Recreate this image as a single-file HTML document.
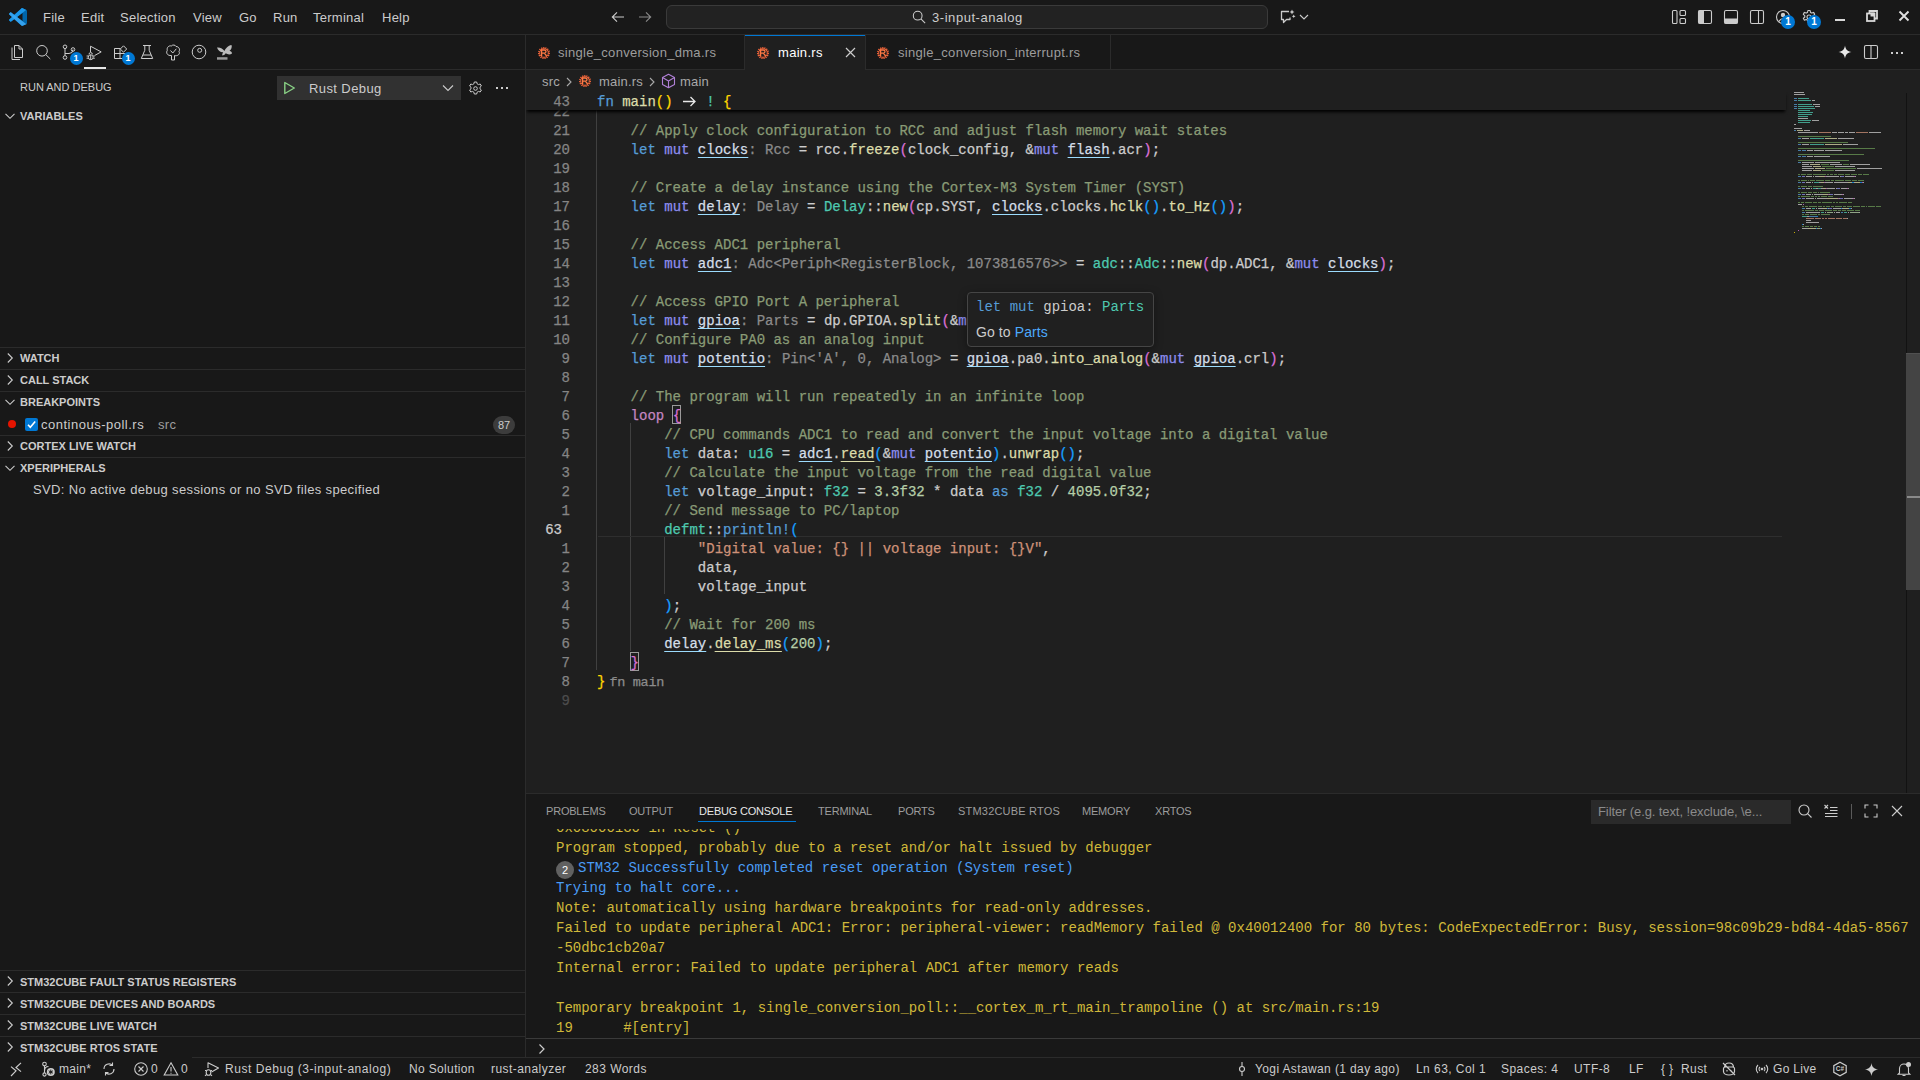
<!DOCTYPE html><html><head><meta charset="utf-8"><style>
*{margin:0;padding:0;box-sizing:border-box}
html,body{width:1920px;height:1080px;overflow:hidden;background:#181818}
body{position:relative;font-family:"Liberation Sans",sans-serif;color:#cccccc;font-size:13px}
.abs{position:absolute}
.mono{font-family:"Liberation Mono",monospace}
.ln{position:absolute;left:0;height:19px;line-height:19px;white-space:pre;font-family:"Liberation Mono",monospace;font-size:14px;-webkit-text-stroke:0.25px}
.num{position:absolute;width:42px;text-align:right;color:#858585}
.code{position:absolute;left:597px;color:#cccccc}
.kw{color:#569cd6}
.mu{color:#8d8df0}
.fnc{color:#dcdcaa}
.ty{color:#4ec9b0}
.cm{color:#899b76}
.kwc{color:#c586c0}
.st{color:#ce9178}
.nu{color:#b5cea8}
.hint{color:#8b8b8b}
.b1{color:#ffd700}
.b2{color:#da70d6}
.b3{color:#179fff}
.ul{color:#d4dee8;text-decoration:underline;text-decoration-color:#9cdcfe;text-underline-offset:3px}
.ulf{text-decoration:underline;text-decoration-color:#dcdcaa;text-underline-offset:3px}
.sh{position:absolute;font-size:11px;font-weight:bold;color:#cccccc;white-space:nowrap}
</style></head><body><div class="abs" style="left:0;top:0;width:1920px;height:35px;background:#181818;border-bottom:1px solid #2b2b2b"></div><div class="abs" style="left:0;top:35px;width:526px;height:1023px;background:#181818;border-right:1px solid #2b2b2b"></div><div class="abs" style="left:0;top:69px;width:526px;height:1px;background:#2b2b2b"></div><div class="abs" style="left:526px;top:35px;width:1394px;height:35px;background:#181818;border-bottom:1px solid #2b2b2b"></div><div class="abs" style="left:526px;top:70px;width:1394px;height:723px;background:#1f1f1f"></div><div class="abs" style="left:526px;top:793px;width:1394px;height:265px;background:#181818;border-top:1px solid #2b2b2b"></div><div class="abs" style="left:0;top:1058px;width:1920px;height:22px;background:#181818"></div><div class="abs" style="left:192px;top:1057px;width:1728px;height:1px;background:#2b2b2b"></div><div class="abs" style="left:526px;top:70px;width:1394px;height:724px;overflow:hidden"><div class="abs" style="left:70px;top:40px;width:1px;height:560px;background:#404040"></div><div class="abs" style="left:104px;top:353px;width:1px;height:228px;background:#404040"></div><div class="abs" style="left:138px;top:467px;width:1px;height:57px;background:#404040"></div><div class="abs" style="left:145.6px;top:335px;width:9px;height:19px;border:1px solid #9a9a9a"></div><div class="abs" style="left:104px;top:582px;width:9px;height:19px;border:1px solid #9a9a9a"></div><div class="abs" style="left:72px;top:466px;width:1184px;height:1px;background:#2e2e2e"></div><div class="ln" style="top:33px;width:1260px"><span class="num" style="left:2px;color:#858585">22</span><span class="code" style="left:71px"></span></div><div class="ln" style="top:52px;width:1260px"><span class="num" style="left:2px;color:#858585">21</span><span class="code" style="left:71px">    <span class="cm">// Apply clock configuration to RCC and adjust flash memory wait states</span></span></div><div class="ln" style="top:71px;width:1260px"><span class="num" style="left:2px;color:#858585">20</span><span class="code" style="left:71px">    <span class="kw">let</span> <span class="mu">mut</span> <span class="ul">clocks</span><span class="hint">: Rcc</span> = rcc.<span class="fnc">freeze</span><span class="b2">(</span>clock_config, &amp;<span class="mu">mut</span> <span class="ul">flash</span>.acr<span class="b2">)</span>;</span></div><div class="ln" style="top:90px;width:1260px"><span class="num" style="left:2px;color:#858585">19</span><span class="code" style="left:71px"></span></div><div class="ln" style="top:109px;width:1260px"><span class="num" style="left:2px;color:#858585">18</span><span class="code" style="left:71px">    <span class="cm">// Create a delay instance using the Cortex-M3 System Timer (SYST)</span></span></div><div class="ln" style="top:128px;width:1260px"><span class="num" style="left:2px;color:#858585">17</span><span class="code" style="left:71px">    <span class="kw">let</span> <span class="mu">mut</span> <span class="ul">delay</span><span class="hint">: Delay</span> = <span class="ty">Delay</span>::<span class="fnc">new</span><span class="b2">(</span>cp.SYST, <span class="ul">clocks</span>.clocks.<span class="fnc">hclk</span><span class="b3">()</span>.<span class="fnc">to_Hz</span><span class="b3">()</span><span class="b2">)</span>;</span></div><div class="ln" style="top:147px;width:1260px"><span class="num" style="left:2px;color:#858585">16</span><span class="code" style="left:71px"></span></div><div class="ln" style="top:166px;width:1260px"><span class="num" style="left:2px;color:#858585">15</span><span class="code" style="left:71px">    <span class="cm">// Access ADC1 peripheral</span></span></div><div class="ln" style="top:185px;width:1260px"><span class="num" style="left:2px;color:#858585">14</span><span class="code" style="left:71px">    <span class="kw">let</span> <span class="mu">mut</span> <span class="ul">adc1</span><span class="hint">: Adc&lt;Periph&lt;RegisterBlock, 1073816576&gt;&gt;</span> = <span class="ty">adc</span>::<span class="ty">Adc</span>::<span class="fnc">new</span><span class="b2">(</span>dp.ADC1, &amp;<span class="mu">mut</span> <span class="ul">clocks</span><span class="b2">)</span>;</span></div><div class="ln" style="top:204px;width:1260px"><span class="num" style="left:2px;color:#858585">13</span><span class="code" style="left:71px"></span></div><div class="ln" style="top:223px;width:1260px"><span class="num" style="left:2px;color:#858585">12</span><span class="code" style="left:71px">    <span class="cm">// Access GPIO Port A peripheral</span></span></div><div class="ln" style="top:242px;width:1260px"><span class="num" style="left:2px;color:#858585">11</span><span class="code" style="left:71px">    <span class="kw">let</span> <span class="mu">mut</span> <span class="ul">gpioa</span><span class="hint">: Parts</span> = dp.GPIOA.<span class="fnc">split</span><span class="b2">(</span>&amp;<span class="mu">mut</span> rcc.apb2<span class="b2">)</span>;</span></div><div class="ln" style="top:261px;width:1260px"><span class="num" style="left:2px;color:#858585">10</span><span class="code" style="left:71px">    <span class="cm">// Configure PA0 as an analog input</span></span></div><div class="ln" style="top:280px;width:1260px"><span class="num" style="left:2px;color:#858585">9</span><span class="code" style="left:71px">    <span class="kw">let</span> <span class="mu">mut</span> <span class="ul">potentio</span><span class="hint">: Pin&lt;'A', 0, Analog&gt;</span> = <span class="ul">gpioa</span>.pa0.<span class="fnc">into_analog</span><span class="b2">(</span>&amp;<span class="mu">mut</span> <span class="ul">gpioa</span>.crl<span class="b2">)</span>;</span></div><div class="ln" style="top:299px;width:1260px"><span class="num" style="left:2px;color:#858585">8</span><span class="code" style="left:71px"></span></div><div class="ln" style="top:318px;width:1260px"><span class="num" style="left:2px;color:#858585">7</span><span class="code" style="left:71px">    <span class="cm">// The program will run repeatedly in an infinite loop</span></span></div><div class="ln" style="top:337px;width:1260px"><span class="num" style="left:2px;color:#858585">6</span><span class="code" style="left:71px">    <span class="kwc">loop</span> <span class="b2">{</span></span></div><div class="ln" style="top:356px;width:1260px"><span class="num" style="left:2px;color:#858585">5</span><span class="code" style="left:71px">        <span class="cm">// CPU commands ADC1 to read and convert the input voltage into a digital value</span></span></div><div class="ln" style="top:375px;width:1260px"><span class="num" style="left:2px;color:#858585">4</span><span class="code" style="left:71px">        <span class="kw">let</span> data: <span class="ty">u16</span> = <span class="ul">adc1</span>.<span class="ulf fnc">read</span><span class="b3">(</span>&amp;<span class="mu">mut</span> <span class="ul">potentio</span><span class="b3">)</span>.<span class="fnc">unwrap</span><span class="b3">()</span>;</span></div><div class="ln" style="top:394px;width:1260px"><span class="num" style="left:2px;color:#858585">3</span><span class="code" style="left:71px">        <span class="cm">// Calculate the input voltage from the read digital value</span></span></div><div class="ln" style="top:413px;width:1260px"><span class="num" style="left:2px;color:#858585">2</span><span class="code" style="left:71px">        <span class="kw">let</span> voltage_input: <span class="ty">f32</span> = <span class="nu">3.3f32</span> * data <span class="kw">as</span> <span class="ty">f32</span> / <span class="nu">4095.0f32</span>;</span></div><div class="ln" style="top:432px;width:1260px"><span class="num" style="left:2px;color:#858585">1</span><span class="code" style="left:71px">        <span class="cm">// Send message to PC/laptop</span></span></div><div class="ln" style="top:451px;width:1260px"><span class="num" style="left:-6px;color:#cccccc">63</span><span class="code" style="left:71px">        <span class="ty">defmt</span>::<span class="kw">println!</span><span class="b3">(</span></span></div><div class="ln" style="top:470px;width:1260px"><span class="num" style="left:2px;color:#858585">1</span><span class="code" style="left:71px">            <span class="st">"Digital value: {} || voltage input: {}V"</span>,</span></div><div class="ln" style="top:489px;width:1260px"><span class="num" style="left:2px;color:#858585">2</span><span class="code" style="left:71px">            data,</span></div><div class="ln" style="top:508px;width:1260px"><span class="num" style="left:2px;color:#858585">3</span><span class="code" style="left:71px">            voltage_input</span></div><div class="ln" style="top:527px;width:1260px"><span class="num" style="left:2px;color:#858585">4</span><span class="code" style="left:71px">        <span class="b3">)</span>;</span></div><div class="ln" style="top:546px;width:1260px"><span class="num" style="left:2px;color:#858585">5</span><span class="code" style="left:71px">        <span class="cm">// Wait for 200 ms</span></span></div><div class="ln" style="top:565px;width:1260px"><span class="num" style="left:2px;color:#858585">6</span><span class="code" style="left:71px">        <span class="ul">delay</span>.<span class="ulf fnc">delay_ms</span><span class="b3">(</span><span class="nu">200</span><span class="b3">)</span>;</span></div><div class="ln" style="top:584px;width:1260px"><span class="num" style="left:2px;color:#858585">7</span><span class="code" style="left:71px">    <span class="b2">}</span></span></div><div class="ln" style="top:603px;width:1260px"><span class="num" style="left:2px;color:#858585">8</span><span class="code" style="left:71px"><span class="b1">}</span><span class="hint" style="font-size:13.5px;margin-left:4px;letter-spacing:-0.3px">fn main</span></span></div><div class="ln" style="top:622px;width:1260px"><span class="num" style="left:2px;color:#4d4d4d">9</span><span class="code" style="left:71px"></span></div><div class="abs" style="left:0;top:21px;width:1260px;height:19px;background:#1f1f1f;box-shadow:0 3px 3px -1px #000"></div><div class="ln" style="top:23px;width:1260px"><span class="num" style="left:2px">43</span><span class="code" style="left:71px"><span class="kw">fn</span> <span class="fnc">main</span><span class="b1">()</span> <svg style="display:inline-block;vertical-align:-1px" width="16.8" height="12" viewBox="0 0 16.8 12"><path d="M2 6.5h12M9.5 2l4.5 4.5-4.5 4.5" stroke="#e8e8e8" stroke-width="1.3" fill="none"/></svg> <span class="ty">!</span> <span class="b1">{</span></span></div></div><svg class="abs" style="left:9px;top:8px" width="18" height="18" viewBox="0 0 100 100">
<path fill="#0065a9" d="M96.5 10.8 75.9 0.9c-2.4-1.2-5.2-0.7-7.1 1.2L29.4 38 12.2 25c-1.6-1.2-3.8-1.1-5.3 0.2L1.4 30.2c-1.8 1.7-1.8 4.5 0 6.2L16.3 50 1.4 63.6c-1.8 1.7-1.8 4.5 0 6.2l5.5 5c1.5 1.4 3.7 1.5 5.3 0.2L29.4 62l39.4 35.9c1.9 1.9 4.7 2.4 7.1 1.2l20.6-9.9c2.2-1 3.5-3.2 3.5-5.6V16.4c0-2.4-1.4-4.6-3.5-5.6zM75 72.7 45.1 50 75 27.3v45.4z"/>
<path fill="#1f9cf0" d="M96.5 10.8 75.9 0.9c-2.4-1.2-5.2-0.7-7.1 1.2L1.4 63.6c-1.8 1.7-1.8 4.5 0 6.2l5.5 5c1.5 1.4 3.7 1.5 5.3 0.2L93.4 12.6c2.7-2.1 6.6-0.1 6.6 3.3v-0.2c0-2.4-1.4-4.6-3.5-4.9z" opacity="0.9"/>
<path fill="#3aa8f5" d="M75.9 99.1c-2.4 1.2-5.2 0.7-7.1-1.2L1.4 36.4c-1.8-1.7-1.8-4.5 0-6.2l5.5-5c1.5-1.4 3.7-1.5 5.3-0.2L93.4 87.4c2.7 2.1 6.6 0.1 6.6-3.3v0.2c0 2.4-1.4 4.6-3.5 5.6z" opacity="0.9"/>
</svg><div class="abs" style="left:43px;top:9px;font-size:13px;line-height:17px;color:#cccccc;letter-spacing:0.25px">File</div><div class="abs" style="left:81px;top:9px;font-size:13px;line-height:17px;color:#cccccc;letter-spacing:0.25px">Edit</div><div class="abs" style="left:120px;top:9px;font-size:13px;line-height:17px;color:#cccccc;letter-spacing:0.25px">Selection</div><div class="abs" style="left:193px;top:9px;font-size:13px;line-height:17px;color:#cccccc;letter-spacing:0.25px">View</div><div class="abs" style="left:239px;top:9px;font-size:13px;line-height:17px;color:#cccccc;letter-spacing:0.25px">Go</div><div class="abs" style="left:273px;top:9px;font-size:13px;line-height:17px;color:#cccccc;letter-spacing:0.25px">Run</div><div class="abs" style="left:313px;top:9px;font-size:13px;line-height:17px;color:#cccccc;letter-spacing:0.25px">Terminal</div><div class="abs" style="left:382px;top:9px;font-size:13px;line-height:17px;color:#cccccc;letter-spacing:0.25px">Help</div><svg class="abs" style="left:610px;top:9px" width="16" height="16" viewBox="0 0 16 16"><path d="M14 8H2.5M7 3.3 2.3 8 7 12.7" stroke="#cccccc" stroke-width="1.1" fill="none"/></svg><svg class="abs" style="left:637px;top:9px" width="16" height="16" viewBox="0 0 16 16"><path d="M2 8h11.5M9 3.3 13.7 8 9 12.7" stroke="#8a8a8a" stroke-width="1.1" fill="none"/></svg><div class="abs" style="left:666px;top:5px;width:602px;height:24px;border:1px solid #3a3a3a;border-radius:6px;background:#222222"></div><svg class="abs" style="left:912px;top:10px" width="14" height="14" viewBox="0 0 16 16"><circle cx="6.5" cy="6.5" r="5" stroke="#cccccc" stroke-width="1.2" fill="none"/><path d="M10.2 10.2 15 15" stroke="#cccccc" stroke-width="1.2"/></svg><div class="abs" style="left:932px;top:9px;font-size:13px;line-height:17px;color:#cccccc;letter-spacing:0.55px">3-input-analog</div><svg class="abs" style="left:1279px;top:8px" width="18" height="18" viewBox="0 0 18 18"><path d="M10 3.5H2.5v8h2v3l3-3H11V9.5" stroke="#cccccc" stroke-width="1.3" fill="none" stroke-linejoin="round"/><path d="M13 1.5l.8 1.7 1.7.8-1.7.8-.8 1.7-.8-1.7-1.7-.8 1.7-.8z M14.7 6.5l.6 1.2 1.2.6-1.2.6-.6 1.2-.6-1.2-1.2-.6 1.2-.6z" fill="#cccccc"/></svg><svg class="abs" style="left:1299px;top:13px" width="10" height="8" viewBox="0 0 10 8"><path d="M1 2l4 4 4-4" stroke="#cccccc" stroke-width="1.1" fill="none"/></svg><svg class="abs" style="left:1671px;top:9px" width="16" height="16" viewBox="0 0 16 16"><rect x="1.5" y="1.5" width="4.5" height="13" rx="1" stroke="#cccccc" stroke-width="1.1" fill="none"/><rect x="9" y="1.5" width="5.5" height="5" rx="1" stroke="#cccccc" stroke-width="1.1" fill="none"/><rect x="9" y="9.5" width="5.5" height="5" rx="1" stroke="#cccccc" stroke-width="1.1" fill="none"/></svg><svg class="abs" style="left:1697px;top:9px" width="16" height="16" viewBox="0 0 16 16"><rect x="1.5" y="1.5" width="13" height="13" rx="1.5" stroke="#cccccc" stroke-width="1.1" fill="none"/><rect x="1.5" y="1.5" width="5.5" height="13" fill="#cccccc"/></svg><svg class="abs" style="left:1723px;top:9px" width="16" height="16" viewBox="0 0 16 16"><rect x="1.5" y="1.5" width="13" height="13" rx="1.5" stroke="#cccccc" stroke-width="1.1" fill="none"/><rect x="1.5" y="9.5" width="13" height="5" fill="#cccccc"/></svg><svg class="abs" style="left:1749px;top:9px" width="16" height="16" viewBox="0 0 16 16"><rect x="1.5" y="1.5" width="13" height="13" rx="1.5" stroke="#cccccc" stroke-width="1.1" fill="none"/><path d="M9.5 1.5v13" stroke="#cccccc" stroke-width="1.1"/></svg><svg class="abs" style="left:1775px;top:9px" width="16" height="16" viewBox="0 0 16 16"><circle cx="8" cy="8" r="6.5" stroke="#cccccc" stroke-width="1.1" fill="none"/><circle cx="8" cy="6" r="2.2" fill="#cccccc"/><path d="M4 12.5c1-2 2.3-2.8 4-2.8s3 .8 4 2.8" stroke="#cccccc" stroke-width="1.1" fill="none"/></svg><svg class="abs" style="left:1801px;top:9px" width="16" height="16" viewBox="0 0 16 16"><path d="M6.9 1.5h2.2l.4 1.9 1.3.7 1.8-.7 1.1 1.9-1.5 1.3v1.4l1.5 1.3-1.1 1.9-1.8-.7-1.3.7-.4 1.9H6.9l-.4-1.9-1.3-.7-1.8.7-1.1-1.9 1.5-1.3V6.6L2.3 5.3l1.1-1.9 1.8.7 1.3-.7z" stroke="#cccccc" stroke-width="1.1" fill="none" stroke-linejoin="round"/><circle cx="8" cy="8" r="2" stroke="#cccccc" stroke-width="1.1" fill="none"/></svg><div class="abs" style="left:1781px;top:15px;width:14px;height:14px;border-radius:7px;background:#0078d4;color:#fff;font-size:10px;font-weight:bold;line-height:14px;text-align:center">1</div><div class="abs" style="left:1807px;top:15px;width:14px;height:14px;border-radius:7px;background:#0078d4;color:#fff;font-size:10px;font-weight:bold;line-height:14px;text-align:center">1</div><div class="abs" style="left:1835px;top:19px;width:10px;height:2px;background:#d8d8d8"></div><svg class="abs" style="left:1866px;top:10px" width="12" height="12" viewBox="0 0 12 12"><path d="M3.5 3.5V1h7.5v7.5H8.5" stroke="#d8d8d8" stroke-width="1.8" fill="none"/><rect x="1" y="3.5" width="7.5" height="7.5" stroke="#d8d8d8" stroke-width="1.8" fill="#181818"/><rect x="4.5" y="2.5" width="4" height="4" fill="#d8d8d8"/></svg><svg class="abs" style="left:1898px;top:10px" width="12" height="12" viewBox="0 0 12 12"><path d="M1.5 1.5l9 9M10.5 1.5l-9 9" stroke="#e0e0e0" stroke-width="1.9"/></svg><svg class="abs" style="left:8px;top:44px" width="16" height="17" viewBox="0 0 16 17" fill="none" stroke="#cccccc" stroke-width="1"><path d="M6.5 1.5h4.5l3.5 3.5v8.5h-8z M11 1.5V5h3.5" stroke-linejoin="round"/><path d="M4 3.5v12h8" /></svg><svg class="abs" style="left:35px;top:44px" width="16" height="16" viewBox="0 0 16 16" fill="none" stroke="#cccccc" stroke-width="1"><circle cx="7" cy="6.8" r="5.3"/><path d="M10.8 10.6 15.3 15"/></svg><svg class="abs" style="left:61px;top:44px" width="16" height="17" viewBox="0 0 16 17" fill="none" stroke="#cccccc" stroke-width="1"><circle cx="4" cy="2.8" r="1.8"/><circle cx="4" cy="13.5" r="1.8"/><circle cx="12" cy="5.5" r="1.8"/><path d="M4 4.6v7.1 M4 9.5h4a4 4 0 0 0 4-4"/></svg><svg class="abs" style="left:86px;top:44px" width="17" height="17" viewBox="0 0 17 17" fill="none" stroke="#cccccc" stroke-width="1"><path d="M4.5 8V2.2L15.2 7.9 8.8 11.4" stroke-linejoin="round"/><path d="M3 10.3a1.7 1.7 0 0 1 3.4 0"/><rect x="2.3" y="10.8" width="4.8" height="4.8" rx="2.2"/><path d="M0.6 12h1.7M7.1 12h1.7M0.6 14.2h1.7M7.1 14.2h1.7M4.7 10.8v4.8"/></svg><svg class="abs" style="left:113px;top:44px" width="17" height="17" viewBox="0 0 17 17" fill="none" stroke="#cccccc" stroke-width="1"><path d="M1.5 4.5h5.5v10h-5.5z M1.5 9.5h10.5v5h-5" /><path d="M10.5 1.8l3.2 3.2-3.2 3.2-3.2-3.2z"/></svg><svg class="abs" style="left:140px;top:44px" width="14" height="16" viewBox="0 0 14 16" fill="none" stroke="#cccccc" stroke-width="1"><path d="M3 1.5h8 M4.8 1.5v4.8L1.3 14.5h11.4L9.2 6.3V1.5 M3 11h8" stroke-linejoin="round"/></svg><svg class="abs" style="left:165px;top:44px" width="16" height="17" viewBox="0 0 16 17" fill="none" stroke="#cccccc" stroke-width="1"><path d="M6.5 11.5 C2 12 0.8 8.5 2.3 6.3 1.5 3.5 4 1.2 6.3 2 7.5 0.5 10.5 0.8 11 2.5 14 2.5 15.3 5.5 14 7.5 15.5 10 12.5 12.5 9.5 11.5V16H6.5z" stroke-linejoin="round"/><path d="M5.5 6.5 7.8 9 11.3 4.8"/></svg><svg class="abs" style="left:191px;top:44px" width="16" height="16" viewBox="0 0 16 16" fill="none" stroke="#cccccc" stroke-width="1"><circle cx="8" cy="8" r="6.8"/><circle cx="8.7" cy="6.3" r="2"/></svg><svg class="abs" style="left:216px;top:44px" width="17" height="17" viewBox="0 0 17 17"><path d="M1 3.5C4 3 7 5 8.5 7 9.5 4.5 12 1.5 15.5 1c0.8 2-0.2 4.5-2 5.8 1.5 0.3 2.5 1.5 2.5 2.8-2 1.3-4.5 1-6.3-0.3-0.8 1.5-2.3 2.2-3.5 2.3 0-1.3 0.3-2.5 1-3.3C4.5 8.5 2 6.5 1 3.5z" fill="#bbbbbb"/><rect x="1" y="13.2" width="10.5" height="2.5" fill="#999999"/></svg><div class="abs" style="left:69.5px;top:51.5px;width:13px;height:13px;border-radius:7px;background:#0078d4;color:#fff;font-size:9px;font-weight:bold;line-height:13px;text-align:center">1</div><div class="abs" style="left:121.5px;top:51.5px;width:13px;height:13px;border-radius:7px;background:#0078d4;color:#fff;font-size:9px;font-weight:bold;line-height:13px;text-align:center">1</div><div class="abs" style="left:84px;top:67px;width:22px;height:2px;background:#e7e7e7"></div><div class="abs" style="left:20px;top:80px;font-size:11px;line-height:14px;color:#cccccc;white-space:nowrap">RUN AND DEBUG</div><div class="abs" style="left:277px;top:76px;width:184px;height:24px;background:#313131"></div><svg class="abs" style="left:283px;top:81px" width="14" height="14" viewBox="0 0 14 14"><path d="M1.8 1.5v11l9.5-5.5z" stroke="#89d185" stroke-width="1.4" fill="none" stroke-linejoin="round"/></svg><div class="abs" style="left:309px;top:81px;font-size:13px;line-height:16px;color:#cccccc;white-space:nowrap;letter-spacing:0.4px">Rust Debug</div><svg class="abs" style="left:442px;top:84px" width="12" height="8" viewBox="0 0 12 8"><path d="M1 1.5l5 5 5-5" stroke="#cccccc" stroke-width="1.1" fill="none"/></svg><svg class="abs" style="left:468px;top:81px" width="15" height="15" viewBox="0 0 15 15" fill="none" stroke="#cccccc" stroke-width="1"><path d="M6.3 1h2.4l.4 1.8 1.4.8 1.7-.6 1.2 2-1.4 1.2v1.6l1.4 1.2-1.2 2-1.7-.6-1.4.8-.4 1.8H6.3l-.4-1.8-1.4-.8-1.7.6-1.2-2 1.4-1.2V6.2L1.6 5l1.2-2 1.7.6 1.4-.8z" stroke-linejoin="round"/><circle cx="7.5" cy="7.5" r="1.8"/></svg><div class="abs" style="left:496px;top:87px;width:2px;height:2px;background:#cccccc"></div><div class="abs" style="left:501px;top:87px;width:2px;height:2px;background:#cccccc"></div><div class="abs" style="left:506px;top:87px;width:2px;height:2px;background:#cccccc"></div><svg class="abs" style="left:4px;top:110px" width="12" height="12" viewBox="0 0 12 12"><path d="M1.5 3.8 6 8.3l4.5-4.5" stroke="#cccccc" stroke-width="1.1" fill="none"/></svg><div class="sh" style="left:20px;top:109px;line-height:14px">VARIABLES</div><div class="abs" style="left:0;top:347px;width:525px;height:1px;background:#2b2b2b"></div><svg class="abs" style="left:4px;top:352px" width="12" height="12" viewBox="0 0 12 12"><path d="M3.8 1.5 8.3 6l-4.5 4.5" stroke="#cccccc" stroke-width="1.1" fill="none"/></svg><div class="sh" style="left:20px;top:351px;line-height:14px">WATCH</div><div class="abs" style="left:0;top:369px;width:525px;height:1px;background:#2b2b2b"></div><svg class="abs" style="left:4px;top:374px" width="12" height="12" viewBox="0 0 12 12"><path d="M3.8 1.5 8.3 6l-4.5 4.5" stroke="#cccccc" stroke-width="1.1" fill="none"/></svg><div class="sh" style="left:20px;top:373px;line-height:14px">CALL STACK</div><div class="abs" style="left:0;top:391px;width:525px;height:1px;background:#2b2b2b"></div><svg class="abs" style="left:4px;top:396px" width="12" height="12" viewBox="0 0 12 12"><path d="M1.5 3.8 6 8.3l4.5-4.5" stroke="#cccccc" stroke-width="1.1" fill="none"/></svg><div class="sh" style="left:20px;top:395px;line-height:14px">BREAKPOINTS</div><div class="abs" style="left:8px;top:420px;width:8px;height:8px;border-radius:4px;background:#e51400"></div><div class="abs" style="left:25px;top:418px;width:13px;height:13px;border-radius:2px;background:#0078d4"></div><svg class="abs" style="left:25px;top:418px" width="13" height="13" viewBox="0 0 13 13"><path d="M3 6.8l2.3 2.4L10.2 3.5" stroke="#fff" stroke-width="1.6" fill="none"/></svg><div class="abs" style="left:41px;top:417px;font-size:13px;line-height:16px;color:#cccccc;white-space:nowrap;letter-spacing:0.5px">continous-poll.rs</div><div class="abs" style="left:158px;top:417px;font-size:13px;line-height:16px;color:#9d9d9d;white-space:nowrap;letter-spacing:0.3px">src</div><div class="abs" style="left:493px;top:416px;width:22px;height:18px;border-radius:9px;background:#3c3c3c;color:#cccccc;font-size:11px;line-height:18px;text-align:center">87</div><div class="abs" style="left:0;top:435px;width:525px;height:1px;background:#2b2b2b"></div><svg class="abs" style="left:4px;top:440px" width="12" height="12" viewBox="0 0 12 12"><path d="M3.8 1.5 8.3 6l-4.5 4.5" stroke="#cccccc" stroke-width="1.1" fill="none"/></svg><div class="sh" style="left:20px;top:439px;line-height:14px">CORTEX LIVE WATCH</div><div class="abs" style="left:0;top:457px;width:525px;height:1px;background:#2b2b2b"></div><svg class="abs" style="left:4px;top:462px" width="12" height="12" viewBox="0 0 12 12"><path d="M1.5 3.8 6 8.3l4.5-4.5" stroke="#cccccc" stroke-width="1.1" fill="none"/></svg><div class="sh" style="left:20px;top:461px;line-height:14px">XPERIPHERALS</div><div class="abs" style="left:33px;top:482px;font-size:13px;line-height:16px;color:#cccccc;white-space:nowrap;letter-spacing:0.36px">SVD: No active debug sessions or no SVD files specified</div><div class="abs" style="left:0;top:970px;width:525px;height:1px;background:#2b2b2b"></div><svg class="abs" style="left:4px;top:975px" width="12" height="12" viewBox="0 0 12 12"><path d="M3.8 1.5 8.3 6l-4.5 4.5" stroke="#cccccc" stroke-width="1.1" fill="none"/></svg><div class="sh" style="left:20px;top:975px;line-height:14px">STM32CUBE FAULT STATUS REGISTERS</div><div class="abs" style="left:0;top:992px;width:525px;height:1px;background:#2b2b2b"></div><svg class="abs" style="left:4px;top:997px" width="12" height="12" viewBox="0 0 12 12"><path d="M3.8 1.5 8.3 6l-4.5 4.5" stroke="#cccccc" stroke-width="1.1" fill="none"/></svg><div class="sh" style="left:20px;top:997px;line-height:14px">STM32CUBE DEVICES AND BOARDS</div><div class="abs" style="left:0;top:1014px;width:525px;height:1px;background:#2b2b2b"></div><svg class="abs" style="left:4px;top:1019px" width="12" height="12" viewBox="0 0 12 12"><path d="M3.8 1.5 8.3 6l-4.5 4.5" stroke="#cccccc" stroke-width="1.1" fill="none"/></svg><div class="sh" style="left:20px;top:1019px;line-height:14px">STM32CUBE LIVE WATCH</div><div class="abs" style="left:0;top:1036px;width:525px;height:1px;background:#2b2b2b"></div><svg class="abs" style="left:4px;top:1041px" width="12" height="12" viewBox="0 0 12 12"><path d="M3.8 1.5 8.3 6l-4.5 4.5" stroke="#cccccc" stroke-width="1.1" fill="none"/></svg><div class="sh" style="left:20px;top:1041px;line-height:14px">STM32CUBE RTOS STATE</div><div class="abs" style="left:744px;top:35px;width:1px;height:34px;background:#2b2b2b"></div><svg class="abs" style="left:537px;top:46px" width="14" height="14" viewBox="0 0 14 14"><circle cx="7" cy="7" r="5.2" stroke="#f0643a" stroke-width="1.6" fill="none" stroke-dasharray="1.2 0.9"/><circle cx="7" cy="7" r="4.3" stroke="#f0643a" stroke-width="1" fill="none"/><path d="M4.6 10V4h2.6c1.1 0 1.8.6 1.8 1.6 0 .9-.6 1.5-1.5 1.6L9.6 10M4.6 7.2h2.4" stroke="#ff7a45" stroke-width="1.3" fill="none"/></svg><div class="abs" style="left:558px;top:45px;font-size:13px;line-height:16px;white-space:nowrap;letter-spacing:0.3px;color:#9d9d9d">single_conversion_dma.rs</div><div class="abs" style="left:745px;top:35px;width:120px;height:35px;background:#1f1f1f;border-top:1px solid #0078d4"></div><svg class="abs" style="left:756px;top:46px" width="14" height="14" viewBox="0 0 14 14"><circle cx="7" cy="7" r="5.2" stroke="#f0643a" stroke-width="1.6" fill="none" stroke-dasharray="1.2 0.9"/><circle cx="7" cy="7" r="4.3" stroke="#f0643a" stroke-width="1" fill="none"/><path d="M4.6 10V4h2.6c1.1 0 1.8.6 1.8 1.6 0 .9-.6 1.5-1.5 1.6L9.6 10M4.6 7.2h2.4" stroke="#ff7a45" stroke-width="1.3" fill="none"/></svg><div class="abs" style="left:778px;top:45px;font-size:13px;line-height:16px;white-space:nowrap;letter-spacing:0.3px;color:#ffffff">main.rs</div><svg class="abs" style="left:845px;top:47px" width="11" height="11" viewBox="0 0 11 11"><path d="M1 1l9 9M10 1 1 10" stroke="#cccccc" stroke-width="1.2"/></svg><div class="abs" style="left:865px;top:35px;width:1px;height:34px;background:#2b2b2b"></div><svg class="abs" style="left:876px;top:46px" width="14" height="14" viewBox="0 0 14 14"><circle cx="7" cy="7" r="5.2" stroke="#f0643a" stroke-width="1.6" fill="none" stroke-dasharray="1.2 0.9"/><circle cx="7" cy="7" r="4.3" stroke="#f0643a" stroke-width="1" fill="none"/><path d="M4.6 10V4h2.6c1.1 0 1.8.6 1.8 1.6 0 .9-.6 1.5-1.5 1.6L9.6 10M4.6 7.2h2.4" stroke="#ff7a45" stroke-width="1.3" fill="none"/></svg><div class="abs" style="left:898px;top:45px;font-size:13px;line-height:16px;white-space:nowrap;letter-spacing:0.3px;color:#9d9d9d">single_conversion_interrupt.rs</div><div class="abs" style="left:1110px;top:35px;width:1px;height:34px;background:#2b2b2b"></div><svg class="abs" style="left:1837px;top:44px" width="16" height="16" viewBox="0 0 16 16"><path d="M8 1.5C8.6 5.5 10.5 7.4 14.5 8 10.5 8.6 8.6 10.5 8 14.5 7.4 10.5 5.5 8.6 1.5 8 5.5 7.4 7.4 5.5 8 1.5z" fill="#e8e8e8"/></svg><svg class="abs" style="left:1863px;top:44px" width="16" height="16" viewBox="0 0 16 16"><rect x="1.5" y="1.5" width="13" height="13" rx="1.5" stroke="#cccccc" stroke-width="1.1" fill="none"/><path d="M8 1.5v13" stroke="#cccccc" stroke-width="1.1"/></svg><div class="abs" style="left:1891px;top:52px;width:2px;height:2px;background:#cccccc"></div><div class="abs" style="left:1896px;top:52px;width:2px;height:2px;background:#cccccc"></div><div class="abs" style="left:1901px;top:52px;width:2px;height:2px;background:#cccccc"></div><div class="abs" style="left:542px;top:74px;font-size:13px;line-height:16px;white-space:nowrap;color:#a9a9a9;letter-spacing:0.2px">src</div><svg class="abs" style="left:564px;top:76px" width="10" height="12" viewBox="0 0 10 12"><path d="M3 2l4 4-4 4" stroke="#a9a9a9" stroke-width="1.1" fill="none"/></svg><svg class="abs" style="left:578px;top:74px" width="14" height="14" viewBox="0 0 14 14"><circle cx="7" cy="7" r="5.2" stroke="#f0643a" stroke-width="1.6" fill="none" stroke-dasharray="1.2 0.9"/><circle cx="7" cy="7" r="4.3" stroke="#f0643a" stroke-width="1" fill="none"/><path d="M4.6 10V4h2.6c1.1 0 1.8.6 1.8 1.6 0 .9-.6 1.5-1.5 1.6L9.6 10M4.6 7.2h2.4" stroke="#ff7a45" stroke-width="1.3" fill="none"/></svg><div class="abs" style="left:599px;top:74px;font-size:13px;line-height:16px;white-space:nowrap;color:#a9a9a9;letter-spacing:0.2px">main.rs</div><svg class="abs" style="left:647px;top:76px" width="10" height="12" viewBox="0 0 10 12"><path d="M3 2l4 4-4 4" stroke="#a9a9a9" stroke-width="1.1" fill="none"/></svg><svg class="abs" style="left:661px;top:73px" width="15" height="16" viewBox="0 0 15 16"><path d="M7.5 1.2 13.5 4.5v7L7.5 14.8 1.5 11.5v-7z M1.5 4.5 7.5 8l6-3.5 M7.5 8v6.8" stroke="#b180d7" stroke-width="1.1" fill="none" stroke-linejoin="round"/></svg><div class="abs" style="left:680px;top:74px;font-size:13px;line-height:16px;white-space:nowrap;color:#a9a9a9;letter-spacing:0.2px">main</div><div class="abs" style="left:546px;top:804px;font-size:11px;line-height:14px;white-space:nowrap;color:#9d9d9d;letter-spacing:-0.2px">PROBLEMS</div><div class="abs" style="left:629px;top:804px;font-size:11px;line-height:14px;white-space:nowrap;color:#9d9d9d;letter-spacing:-0.2px">OUTPUT</div><div class="abs" style="left:699px;top:804px;font-size:11px;line-height:14px;white-space:nowrap;color:#e7e7e7;letter-spacing:-0.2px">DEBUG CONSOLE</div><div class="abs" style="left:818px;top:804px;font-size:11px;line-height:14px;white-space:nowrap;color:#9d9d9d;letter-spacing:-0.2px">TERMINAL</div><div class="abs" style="left:898px;top:804px;font-size:11px;line-height:14px;white-space:nowrap;color:#9d9d9d;letter-spacing:-0.2px">PORTS</div><div class="abs" style="left:958px;top:804px;font-size:11px;line-height:14px;white-space:nowrap;color:#9d9d9d;letter-spacing:0.2px">STM32CUBE RTOS</div><div class="abs" style="left:1082px;top:804px;font-size:11px;line-height:14px;white-space:nowrap;color:#9d9d9d;letter-spacing:-0.2px">MEMORY</div><div class="abs" style="left:1155px;top:804px;font-size:11px;line-height:14px;white-space:nowrap;color:#9d9d9d;letter-spacing:-0.2px">XRTOS</div><div class="abs" style="left:698px;top:821px;width:98px;height:1px;background:#0078d4"></div><div class="abs" style="left:1591px;top:800px;width:200px;height:24px;background:#2a2a2a"></div><div class="abs" style="left:1598px;top:804px;font-size:13px;line-height:16px;color:#8b8b8b;white-space:nowrap;letter-spacing:-0.1px">Filter (e.g. text, !exclude, \e...</div><svg class="abs" style="left:1797px;top:803px" width="16" height="16" viewBox="0 0 16 16"><circle cx="7" cy="7" r="5" stroke="#cccccc" stroke-width="1.1" fill="none"/><path d="M10.6 10.6 14.5 14.5" stroke="#cccccc" stroke-width="1.1"/></svg><svg class="abs" style="left:1823px;top:803px" width="16" height="16" viewBox="0 0 16 16"><path d="M1.5 2l3.5 3.5M5 2 1.5 5.5 M7 4.5h7.5 M7 7.5h7.5 M2 10.5h12.5 M2 13.5h12.5" stroke="#cccccc" stroke-width="1.1" fill="none"/></svg><div class="abs" style="left:1851px;top:804px;width:1px;height:15px;background:#5a5a5a"></div><svg class="abs" style="left:1863px;top:803px" width="16" height="16" viewBox="0 0 16 16"><path d="M2 5.5V2h3.5 M10.5 2H14v3.5 M14 10.5V14h-3.5 M5.5 14H2v-3.5" stroke="#cccccc" stroke-width="1.1" fill="none"/></svg><svg class="abs" style="left:1890px;top:804px" width="14" height="14" viewBox="0 0 14 14"><path d="M2 2l10 10M12 2 2 12" stroke="#cccccc" stroke-width="1.1"/></svg><div class="abs" style="left:526px;top:829px;width:1394px;height:209px;overflow:hidden"><div class="abs mono" style="left:30px;top:-11px;font-size:14px;line-height:20px;white-space:pre;color:#d0b83a">0x08000130 in Reset ()</div><div class="abs mono" style="left:30px;top:9px;font-size:14px;line-height:20px;white-space:pre;color:#d0b83a">Program stopped, probably due to a reset and/or halt issued by debugger</div><div class="abs" style="left:30px;top:32px;width:18px;height:18px;border-radius:9px;background:#616161;color:#fff;font-size:11px;line-height:18px;text-align:center">2</div><div class="abs mono" style="left:52px;top:29px;font-size:14px;line-height:20px;white-space:pre;color:#4a9cf5">STM32 Successfully completed reset operation (System reset)</div><div class="abs mono" style="left:30px;top:49px;font-size:14px;line-height:20px;white-space:pre;color:#4a9cf5">Trying to halt core...</div><div class="abs mono" style="left:30px;top:69px;font-size:14px;line-height:20px;white-space:pre;color:#d0b83a">Note: automatically using hardware breakpoints for read-only addresses.</div><div class="abs mono" style="left:30px;top:89px;font-size:14px;line-height:20px;white-space:pre;color:#d0b83a">Failed to update peripheral ADC1: Error: peripheral-viewer: readMemory failed @ 0x40012400 for 80 bytes: CodeExpectedError: Busy, session=98c09b29-bd84-4da5-8567</div><div class="abs mono" style="left:30px;top:109px;font-size:14px;line-height:20px;white-space:pre;color:#d0b83a">-50dbc1cb20a7</div><div class="abs mono" style="left:30px;top:129px;font-size:14px;line-height:20px;white-space:pre;color:#d0b83a">Internal error: Failed to update peripheral ADC1 after memory reads</div><div class="abs mono" style="left:30px;top:149px;font-size:14px;line-height:20px;white-space:pre;color:#d0b83a"></div><div class="abs mono" style="left:30px;top:169px;font-size:14px;line-height:20px;white-space:pre;color:#d0b83a">Temporary breakpoint 1, single_conversion_poll::__cortex_m_rt_main_trampoline () at src/main.rs:19</div><div class="abs mono" style="left:30px;top:189px;font-size:14px;line-height:20px;white-space:pre;color:#d0b83a">19      #[entry]</div></div><div class="abs" style="left:526px;top:1038px;width:1394px;height:1px;background:#3a3a3a"></div><svg class="abs" style="left:536px;top:1043px" width="12" height="12" viewBox="0 0 12 12"><path d="M3.5 1.5 8 6l-4.5 4.5" stroke="#cccccc" stroke-width="1.2" fill="none"/></svg><svg class="abs" style="left:10px;top:1061px" width="16" height="16" viewBox="0 0 16 16" fill="none" stroke="#cccccc" stroke-width="1.1"><path d="M1 5.6 6 9.8 1 15 M11 1.9 6 6.5 11 10.6" stroke-width="1.2"/></svg><svg class="abs" style="left:41px;top:1061px" width="16" height="16" viewBox="0 0 16 16" fill="none" stroke="#cccccc" stroke-width="1.1"><circle cx="3.5" cy="3" r="1.8"/><circle cx="3.5" cy="13.5" r="1.6"/><path d="M3.5 4.8v7.1"/><path d="M3.5 10c0-3 1.5-4.5 4-4.5"/><circle cx="9.8" cy="11" r="4" fill="#cccccc" stroke="none"/><path d="M9.8 8.6v4.8M7.7 9.8l4.2 2.4M11.9 9.8l-4.2 2.4" stroke="#181818" stroke-width="1"/></svg><div class="abs" style="left:59px;top:1061px;font-size:12px;line-height:16px;white-space:nowrap;color:#cccccc;letter-spacing:0.3px">main*</div><svg class="abs" style="left:101px;top:1061px" width="16" height="16" viewBox="0 0 16 16" fill="none" stroke="#cccccc" stroke-width="1.1"><path d="M3 8a5 5 0 0 1 8.6-3.5M13 8a5 5 0 0 1-8.6 3.5 M11.5 1.5v3h-3 M4.5 14.5v-3h3"/></svg><svg class="abs" style="left:133px;top:1061px" width="16" height="16" viewBox="0 0 16 16" fill="none" stroke="#cccccc" stroke-width="1.1"><circle cx="8" cy="8" r="6.3"/><path d="M5.5 5.5l5 5M10.5 5.5l-5 5"/></svg><div class="abs" style="left:151px;top:1061px;font-size:12px;line-height:16px;white-space:nowrap;color:#cccccc;letter-spacing:0px">0</div><svg class="abs" style="left:163px;top:1061px" width="16" height="16" viewBox="0 0 16 16" fill="none" stroke="#cccccc" stroke-width="1.1"><path d="M8 1.8 14.8 14H1.2z M8 6v4.5 M8 11.8v1"/></svg><div class="abs" style="left:181px;top:1061px;font-size:12px;line-height:16px;white-space:nowrap;color:#cccccc;letter-spacing:0px">0</div><svg class="abs" style="left:204px;top:1061px" width="16" height="16" viewBox="0 0 16 16" fill="none" stroke="#cccccc" stroke-width="1.1"><path d="M4 7V1.8l10.5 5.2-7 4" stroke-linejoin="round"/><ellipse cx="4.5" cy="11.5" rx="2.3" ry="2.8"/><path d="M1 9.5h1.3M8 9.5H6.8M1 14.8l1.5-1.2M8 14.8l-1.5-1.2"/></svg><div class="abs" style="left:225px;top:1061px;font-size:12px;line-height:16px;white-space:nowrap;color:#cccccc;letter-spacing:0.55px">Rust Debug (3-input-analog)</div><div class="abs" style="left:409px;top:1061px;font-size:12px;line-height:16px;white-space:nowrap;color:#cccccc;letter-spacing:0.35px">No Solution</div><div class="abs" style="left:491px;top:1061px;font-size:12px;line-height:16px;white-space:nowrap;color:#cccccc;letter-spacing:0.45px">rust-analyzer</div><div class="abs" style="left:585px;top:1061px;font-size:12px;line-height:16px;white-space:nowrap;color:#cccccc;letter-spacing:0.45px">283 Words</div><svg class="abs" style="left:1235px;top:1061px" width="14" height="16" viewBox="0 0 14 16" fill="none" stroke="#cccccc" stroke-width="1.1"><circle cx="7" cy="8" r="2.5"/><path d="M7 1v4.5M7 10.5V15"/></svg><div class="abs" style="left:1255px;top:1061px;font-size:12px;line-height:16px;white-space:nowrap;color:#cccccc;letter-spacing:0.38px">Yogi Astawan (1 day ago)</div><div class="abs" style="left:1416px;top:1061px;font-size:12px;line-height:16px;white-space:nowrap;color:#cccccc;letter-spacing:0.45px">Ln 63, Col 1</div><div class="abs" style="left:1501px;top:1061px;font-size:12px;line-height:16px;white-space:nowrap;color:#cccccc;letter-spacing:0.45px">Spaces: 4</div><div class="abs" style="left:1574px;top:1061px;font-size:12px;line-height:16px;white-space:nowrap;color:#cccccc;letter-spacing:0.45px">UTF-8</div><div class="abs" style="left:1629px;top:1061px;font-size:12px;line-height:16px;white-space:nowrap;color:#cccccc;letter-spacing:0.3px">LF</div><div class="abs" style="left:1661px;top:1061px;font-size:12px;line-height:16px;white-space:nowrap;color:#cccccc;letter-spacing:0.3px">{ }</div><div class="abs" style="left:1681px;top:1061px;font-size:12px;line-height:16px;white-space:nowrap;color:#cccccc;letter-spacing:0.4px">Rust</div><svg class="abs" style="left:1721px;top:1061px" width="16" height="16" viewBox="0 0 16 16" fill="none" stroke="#cccccc" stroke-width="1.1"><path d="M3.5 6.5C3.5 3.5 5.5 2 8 2s4.5 1.5 4.5 4.5 M2.5 7.5c0-1 1-1.5 2-1.5h7c1 0 2 .5 2 1.5v3c0 2-2.5 3.5-5.5 3.5s-5.5-1.5-5.5-3.5z M6 9v1.5M10 9v1.5 M2 2l12 12" stroke-width="1.2"/></svg><svg class="abs" style="left:1754px;top:1061px" width="16" height="16" viewBox="0 0 16 16" fill="none" stroke="#cccccc" stroke-width="1.1"><path d="M4 4a5.5 5.5 0 0 0 0 8M12 4a5.5 5.5 0 0 1 0 8M6 6a2.5 2.5 0 0 0 0 4M10 6a2.5 2.5 0 0 1 0 4"/><circle cx="8" cy="8" r="0.8" fill="#cccccc"/></svg><div class="abs" style="left:1773px;top:1061px;font-size:12px;line-height:16px;white-space:nowrap;color:#cccccc;letter-spacing:0.3px">Go Live</div><svg class="abs" style="left:1832px;top:1061px" width="16" height="16" viewBox="0 0 16 16" fill="none" stroke="#cccccc" stroke-width="1.1"><path d="M8 1.2 14.2 4.6v6.8L8 14.8 1.8 11.4V4.6z" stroke-width="1.2"/><text x="8" y="10.3" font-family="Liberation Sans" font-size="6.5" font-weight="bold" fill="#cccccc" stroke="none" text-anchor="middle">C#</text></svg><svg class="abs" style="left:1864px;top:1062px" width="15" height="15" viewBox="0 0 16 16"><path d="M8 1C8.6 5.3 10.7 7.4 15 8 10.7 8.6 8.6 10.7 8 15 7.4 10.7 5.3 8.6 1 8 5.3 7.4 7.4 5.3 8 1z" fill="#cccccc"/></svg><svg class="abs" style="left:1896px;top:1061px" width="16" height="16" viewBox="0 0 16 16" fill="none" stroke="#cccccc" stroke-width="1.1"><path d="M3.5 12V7.5a4.5 4.5 0 0 1 9 0V12l1.3 1.2H2.2z M6.5 14.5h3"/><circle cx="12.5" cy="3.5" r="2.5" fill="#cccccc" stroke="none"/></svg><div class="abs" style="left:967px;top:292px;width:187px;height:55px;background:#202020;border:1px solid #454545;border-radius:4px;box-shadow:0 2px 8px rgba(0,0,0,0.36)"></div><div class="abs mono" style="left:976px;top:298px;font-size:14px;line-height:19px;white-space:pre;color:#cccccc"><span class="kw">let</span> <span class="kw">mut</span> gpioa: <span class="ty">Parts</span></div><div class="abs" style="left:976px;top:324px;font-size:14px;line-height:17px;white-space:nowrap;color:#cccccc;letter-spacing:0.1px">Go to <span style="color:#4daafc">Parts</span></div><div class="abs" style="left:1906px;top:93px;width:1px;height:700px;background:#121212"></div><div class="abs" style="left:1906px;top:353px;width:14px;height:237px;background:#444444;border-top:1px solid #505050"></div><div class="abs" style="left:1907px;top:496px;width:13px;height:2px;background:#8a8a8a"></div><div class="abs" style="left:1794.0px;top:92.0px;width:10.0px;height:1px;background:#cccccc;opacity:0.75;box-shadow:0 1px 0 rgba(0,0,0,0)"></div><div class="abs" style="left:1794.0px;top:94.0px;width:11.0px;height:1px;background:#cccccc;opacity:0.75;box-shadow:0 1px 0 rgba(0,0,0,0)"></div><div class="abs" style="left:1794.0px;top:98.0px;width:3.0px;height:1px;background:#569cd6;opacity:0.75;box-shadow:0 1px 0 rgba(0,0,0,0)"></div><div class="abs" style="left:1798.0px;top:98.0px;width:11.0px;height:1px;background:#4ec9b0;opacity:0.75;box-shadow:0 1px 0 rgba(0,0,0,0)"></div><div class="abs" style="left:1794.0px;top:100.0px;width:3.0px;height:1px;background:#569cd6;opacity:0.75;box-shadow:0 1px 0 rgba(0,0,0,0)"></div><div class="abs" style="left:1798.0px;top:100.0px;width:13.0px;height:1px;background:#4ec9b0;opacity:0.75;box-shadow:0 1px 0 rgba(0,0,0,0)"></div><div class="abs" style="left:1812.0px;top:100.0px;width:3.0px;height:1px;background:#cccccc;opacity:0.75;box-shadow:0 1px 0 rgba(0,0,0,0)"></div><div class="abs" style="left:1794.0px;top:104.0px;width:3.0px;height:1px;background:#569cd6;opacity:0.75;box-shadow:0 1px 0 rgba(0,0,0,0)"></div><div class="abs" style="left:1798.0px;top:104.0px;width:14.0px;height:1px;background:#4ec9b0;opacity:0.75;box-shadow:0 1px 0 rgba(0,0,0,0)"></div><div class="abs" style="left:1813.0px;top:104.0px;width:7.0px;height:1px;background:#cccccc;opacity:0.75;box-shadow:0 1px 0 rgba(0,0,0,0)"></div><div class="abs" style="left:1794.0px;top:106.0px;width:3.0px;height:1px;background:#569cd6;opacity:0.75;box-shadow:0 1px 0 rgba(0,0,0,0)"></div><div class="abs" style="left:1798.0px;top:106.0px;width:16.0px;height:1px;background:#4ec9b0;opacity:0.75;box-shadow:0 1px 0 rgba(0,0,0,0)"></div><div class="abs" style="left:1815.0px;top:106.0px;width:5.0px;height:1px;background:#cccccc;opacity:0.75;box-shadow:0 1px 0 rgba(0,0,0,0)"></div><div class="abs" style="left:1794.0px;top:108.0px;width:3.0px;height:1px;background:#569cd6;opacity:0.75;box-shadow:0 1px 0 rgba(0,0,0,0)"></div><div class="abs" style="left:1798.0px;top:108.0px;width:17.0px;height:1px;background:#4ec9b0;opacity:0.75;box-shadow:0 1px 0 rgba(0,0,0,0)"></div><div class="abs" style="left:1798.0px;top:110.0px;width:12.0px;height:1px;background:#4ec9b0;opacity:0.75;box-shadow:0 1px 0 rgba(0,0,0,0)"></div><div class="abs" style="left:1798.0px;top:112.0px;width:15.0px;height:1px;background:#4ec9b0;opacity:0.75;box-shadow:0 1px 0 rgba(0,0,0,0)"></div><div class="abs" style="left:1798.0px;top:114.0px;width:14.0px;height:1px;background:#4ec9b0;opacity:0.75;box-shadow:0 1px 0 rgba(0,0,0,0)"></div><div class="abs" style="left:1798.0px;top:116.0px;width:10.0px;height:1px;background:#4ec9b0;opacity:0.75;box-shadow:0 1px 0 rgba(0,0,0,0)"></div><div class="abs" style="left:1798.0px;top:118.0px;width:10.0px;height:1px;background:#cccccc;opacity:0.75;box-shadow:0 1px 0 rgba(0,0,0,0)"></div><div class="abs" style="left:1798.0px;top:120.0px;width:13.0px;height:1px;background:#4ec9b0;opacity:0.75;box-shadow:0 1px 0 rgba(0,0,0,0)"></div><div class="abs" style="left:1812.0px;top:120.0px;width:7.0px;height:1px;background:#cccccc;opacity:0.75;box-shadow:0 1px 0 rgba(0,0,0,0)"></div><div class="abs" style="left:1798.0px;top:122.0px;width:12.0px;height:1px;background:#4ec9b0;opacity:0.75;box-shadow:0 1px 0 rgba(0,0,0,0)"></div><div class="abs" style="left:1794.0px;top:124.0px;width:2.0px;height:1px;background:#cccccc;opacity:0.75;box-shadow:0 1px 0 rgba(0,0,0,0)"></div><div class="abs" style="left:1794.0px;top:128.0px;width:8.0px;height:1px;background:#cccccc;opacity:0.75;box-shadow:0 1px 0 rgba(0,0,0,0)"></div><div class="abs" style="left:1794.0px;top:130.0px;width:2.0px;height:1px;background:#569cd6;opacity:0.75;box-shadow:0 1px 0 rgba(0,0,0,0)"></div><div class="abs" style="left:1797.0px;top:130.0px;width:6.0px;height:1px;background:#dcdcaa;opacity:0.75;box-shadow:0 1px 0 rgba(0,0,0,0)"></div><div class="abs" style="left:1804.0px;top:130.0px;width:6.0px;height:1px;background:#cccccc;opacity:0.75;box-shadow:0 1px 0 rgba(0,0,0,0)"></div><div class="abs" style="left:1798.0px;top:132.0px;width:20.0px;height:1px;background:#cccccc;opacity:0.75;box-shadow:0 1px 0 rgba(0,0,0,0)"></div><div class="abs" style="left:1819.0px;top:132.0px;width:12.0px;height:1px;background:#ce9178;opacity:0.75;box-shadow:0 1px 0 rgba(0,0,0,0)"></div><div class="abs" style="left:1832.0px;top:132.0px;width:5.0px;height:1px;background:#cccccc;opacity:0.75;box-shadow:0 1px 0 rgba(0,0,0,0)"></div><div class="abs" style="left:1838.0px;top:132.0px;width:6.0px;height:1px;background:#cccccc;opacity:0.75;box-shadow:0 1px 0 rgba(0,0,0,0)"></div><div class="abs" style="left:1845.0px;top:132.0px;width:3.0px;height:1px;background:#cccccc;opacity:0.75;box-shadow:0 1px 0 rgba(0,0,0,0)"></div><div class="abs" style="left:1849.0px;top:132.0px;width:6.0px;height:1px;background:#cccccc;opacity:0.75;box-shadow:0 1px 0 rgba(0,0,0,0)"></div><div class="abs" style="left:1856.0px;top:132.0px;width:12.0px;height:1px;background:#ce9178;opacity:0.75;box-shadow:0 1px 0 rgba(0,0,0,0)"></div><div class="abs" style="left:1869.0px;top:132.0px;width:12.0px;height:1px;background:#cccccc;opacity:0.75;box-shadow:0 1px 0 rgba(0,0,0,0)"></div><div class="abs" style="left:1798.0px;top:136.0px;width:33.0px;height:1px;background:#6a9955;opacity:0.75;box-shadow:0 1px 0 rgba(0,0,0,0)"></div><div class="abs" style="left:1798.0px;top:138.0px;width:3.0px;height:1px;background:#569cd6;opacity:0.75;box-shadow:0 1px 0 rgba(0,0,0,0)"></div><div class="abs" style="left:1802.0px;top:138.0px;width:7.0px;height:1px;background:#cccccc;opacity:0.75;box-shadow:0 1px 0 rgba(0,0,0,0)"></div><div class="abs" style="left:1810.0px;top:138.0px;width:14.0px;height:1px;background:#4ec9b0;opacity:0.75;box-shadow:0 1px 0 rgba(0,0,0,0)"></div><div class="abs" style="left:1825.0px;top:138.0px;width:12.0px;height:1px;background:#dcdcaa;opacity:0.75;box-shadow:0 1px 0 rgba(0,0,0,0)"></div><div class="abs" style="left:1838.0px;top:138.0px;width:16.0px;height:1px;background:#cccccc;opacity:0.75;box-shadow:0 1px 0 rgba(0,0,0,0)"></div><div class="abs" style="left:1798.0px;top:142.0px;width:50.0px;height:1px;background:#6a9955;opacity:0.75;box-shadow:0 1px 0 rgba(0,0,0,0)"></div><div class="abs" style="left:1798.0px;top:144.0px;width:3.0px;height:1px;background:#569cd6;opacity:0.75;box-shadow:0 1px 0 rgba(0,0,0,0)"></div><div class="abs" style="left:1802.0px;top:144.0px;width:7.0px;height:1px;background:#cccccc;opacity:0.75;box-shadow:0 1px 0 rgba(0,0,0,0)"></div><div class="abs" style="left:1810.0px;top:144.0px;width:14.0px;height:1px;background:#4ec9b0;opacity:0.75;box-shadow:0 1px 0 rgba(0,0,0,0)"></div><div class="abs" style="left:1825.0px;top:144.0px;width:17.0px;height:1px;background:#dcdcaa;opacity:0.75;box-shadow:0 1px 0 rgba(0,0,0,0)"></div><div class="abs" style="left:1843.0px;top:144.0px;width:15.0px;height:1px;background:#cccccc;opacity:0.75;box-shadow:0 1px 0 rgba(0,0,0,0)"></div><div class="abs" style="left:1798.0px;top:148.0px;width:77.0px;height:1px;background:#6a9955;opacity:0.75;box-shadow:0 1px 0 rgba(0,0,0,0)"></div><div class="abs" style="left:1798.0px;top:150.0px;width:3.0px;height:1px;background:#569cd6;opacity:0.75;box-shadow:0 1px 0 rgba(0,0,0,0)"></div><div class="abs" style="left:1802.0px;top:150.0px;width:4.0px;height:1px;background:#569cd6;opacity:0.75;box-shadow:0 1px 0 rgba(0,0,0,0)"></div><div class="abs" style="left:1807.0px;top:150.0px;width:6.0px;height:1px;background:#cccccc;opacity:0.75;box-shadow:0 1px 0 rgba(0,0,0,0)"></div><div class="abs" style="left:1814.0px;top:150.0px;width:10.0px;height:1px;background:#cccccc;opacity:0.75;box-shadow:0 1px 0 rgba(0,0,0,0)"></div><div class="abs" style="left:1825.0px;top:150.0px;width:17.0px;height:1px;background:#cccccc;opacity:0.75;box-shadow:0 1px 0 rgba(0,0,0,0)"></div><div class="abs" style="left:1798.0px;top:154.0px;width:66.0px;height:1px;background:#6a9955;opacity:0.75;box-shadow:0 1px 0 rgba(0,0,0,0)"></div><div class="abs" style="left:1798.0px;top:156.0px;width:3.0px;height:1px;background:#569cd6;opacity:0.75;box-shadow:0 1px 0 rgba(0,0,0,0)"></div><div class="abs" style="left:1802.0px;top:156.0px;width:4.0px;height:1px;background:#569cd6;opacity:0.75;box-shadow:0 1px 0 rgba(0,0,0,0)"></div><div class="abs" style="left:1807.0px;top:156.0px;width:6.0px;height:1px;background:#cccccc;opacity:0.75;box-shadow:0 1px 0 rgba(0,0,0,0)"></div><div class="abs" style="left:1814.0px;top:156.0px;width:16.0px;height:1px;background:#cccccc;opacity:0.75;box-shadow:0 1px 0 rgba(0,0,0,0)"></div><div class="abs" style="left:1798.0px;top:160.0px;width:51.0px;height:1px;background:#6a9955;opacity:0.75;box-shadow:0 1px 0 rgba(0,0,0,0)"></div><div class="abs" style="left:1798.0px;top:162.0px;width:3.0px;height:1px;background:#569cd6;opacity:0.75;box-shadow:0 1px 0 rgba(0,0,0,0)"></div><div class="abs" style="left:1802.0px;top:162.0px;width:12.0px;height:1px;background:#cccccc;opacity:0.75;box-shadow:0 1px 0 rgba(0,0,0,0)"></div><div class="abs" style="left:1815.0px;top:162.0px;width:25.0px;height:1px;background:#cccccc;opacity:0.75;box-shadow:0 1px 0 rgba(0,0,0,0)"></div><div class="abs" style="left:1802.0px;top:164.0px;width:7.0px;height:1px;background:#cccccc;opacity:0.75;box-shadow:0 1px 0 rgba(0,0,0,0)"></div><div class="abs" style="left:1810.0px;top:164.0px;width:10.0px;height:1px;background:#dcdcaa;opacity:0.75;box-shadow:0 1px 0 rgba(0,0,0,0)"></div><div class="abs" style="left:1821.0px;top:164.0px;width:8.0px;height:1px;background:#6a9955;opacity:0.75;box-shadow:0 1px 0 rgba(0,0,0,0)"></div><div class="abs" style="left:1830.0px;top:164.0px;width:12.0px;height:1px;background:#cccccc;opacity:0.75;box-shadow:0 1px 0 rgba(0,0,0,0)"></div><div class="abs" style="left:1843.0px;top:164.0px;width:6.0px;height:1px;background:#6a9955;opacity:0.75;box-shadow:0 1px 0 rgba(0,0,0,0)"></div><div class="abs" style="left:1850.0px;top:164.0px;width:20.0px;height:1px;background:#cccccc;opacity:0.75;box-shadow:0 1px 0 rgba(0,0,0,0)"></div><div class="abs" style="left:1802.0px;top:166.0px;width:10.0px;height:1px;background:#cccccc;opacity:0.75;box-shadow:0 1px 0 rgba(0,0,0,0)"></div><div class="abs" style="left:1813.0px;top:166.0px;width:8.0px;height:1px;background:#dcdcaa;opacity:0.75;box-shadow:0 1px 0 rgba(0,0,0,0)"></div><div class="abs" style="left:1822.0px;top:166.0px;width:12.0px;height:1px;background:#6a9955;opacity:0.75;box-shadow:0 1px 0 rgba(0,0,0,0)"></div><div class="abs" style="left:1835.0px;top:166.0px;width:20.0px;height:1px;background:#cccccc;opacity:0.75;box-shadow:0 1px 0 rgba(0,0,0,0)"></div><div class="abs" style="left:1802.0px;top:168.0px;width:12.0px;height:1px;background:#cccccc;opacity:0.75;box-shadow:0 1px 0 rgba(0,0,0,0)"></div><div class="abs" style="left:1815.0px;top:168.0px;width:10.0px;height:1px;background:#dcdcaa;opacity:0.75;box-shadow:0 1px 0 rgba(0,0,0,0)"></div><div class="abs" style="left:1826.0px;top:168.0px;width:30.0px;height:1px;background:#6a9955;opacity:0.75;box-shadow:0 1px 0 rgba(0,0,0,0)"></div><div class="abs" style="left:1857.0px;top:168.0px;width:25.0px;height:1px;background:#cccccc;opacity:0.75;box-shadow:0 1px 0 rgba(0,0,0,0)"></div><div class="abs" style="left:1802.0px;top:170.0px;width:10.0px;height:1px;background:#cccccc;opacity:0.75;box-shadow:0 1px 0 rgba(0,0,0,0)"></div><div class="abs" style="left:1813.0px;top:170.0px;width:8.0px;height:1px;background:#dcdcaa;opacity:0.75;box-shadow:0 1px 0 rgba(0,0,0,0)"></div><div class="abs" style="left:1822.0px;top:170.0px;width:12.0px;height:1px;background:#6a9955;opacity:0.75;box-shadow:0 1px 0 rgba(0,0,0,0)"></div><div class="abs" style="left:1835.0px;top:170.0px;width:20.0px;height:1px;background:#cccccc;opacity:0.75;box-shadow:0 1px 0 rgba(0,0,0,0)"></div><div class="abs" style="left:1798.0px;top:174.0px;width:2.0px;height:1px;background:#6a9955;opacity:0.75;box-shadow:0 1px 0 rgba(0,0,0,0)"></div><div class="abs" style="left:1801.0px;top:174.0px;width:5.0px;height:1px;background:#6a9955;opacity:0.75;box-shadow:0 1px 0 rgba(0,0,0,0)"></div><div class="abs" style="left:1807.0px;top:174.0px;width:5.0px;height:1px;background:#6a9955;opacity:0.75;box-shadow:0 1px 0 rgba(0,0,0,0)"></div><div class="abs" style="left:1813.0px;top:174.0px;width:13.0px;height:1px;background:#6a9955;opacity:0.75;box-shadow:0 1px 0 rgba(0,0,0,0)"></div><div class="abs" style="left:1827.0px;top:174.0px;width:2.0px;height:1px;background:#6a9955;opacity:0.75;box-shadow:0 1px 0 rgba(0,0,0,0)"></div><div class="abs" style="left:1830.0px;top:174.0px;width:3.0px;height:1px;background:#6a9955;opacity:0.75;box-shadow:0 1px 0 rgba(0,0,0,0)"></div><div class="abs" style="left:1834.0px;top:174.0px;width:3.0px;height:1px;background:#6a9955;opacity:0.75;box-shadow:0 1px 0 rgba(0,0,0,0)"></div><div class="abs" style="left:1838.0px;top:174.0px;width:6.0px;height:1px;background:#6a9955;opacity:0.75;box-shadow:0 1px 0 rgba(0,0,0,0)"></div><div class="abs" style="left:1845.0px;top:174.0px;width:5.0px;height:1px;background:#6a9955;opacity:0.75;box-shadow:0 1px 0 rgba(0,0,0,0)"></div><div class="abs" style="left:1851.0px;top:174.0px;width:6.0px;height:1px;background:#6a9955;opacity:0.75;box-shadow:0 1px 0 rgba(0,0,0,0)"></div><div class="abs" style="left:1858.0px;top:174.0px;width:4.0px;height:1px;background:#6a9955;opacity:0.75;box-shadow:0 1px 0 rgba(0,0,0,0)"></div><div class="abs" style="left:1863.0px;top:174.0px;width:6.0px;height:1px;background:#6a9955;opacity:0.75;box-shadow:0 1px 0 rgba(0,0,0,0)"></div><div class="abs" style="left:1798.0px;top:176.0px;width:3.0px;height:1px;background:#569cd6;opacity:0.75;box-shadow:0 1px 0 rgba(0,0,0,0)"></div><div class="abs" style="left:1802.0px;top:176.0px;width:3.0px;height:1px;background:#8d8df0;opacity:0.75;box-shadow:0 1px 0 rgba(0,0,0,0)"></div><div class="abs" style="left:1806.0px;top:176.0px;width:6.0px;height:1px;background:#cccccc;opacity:0.75;box-shadow:0 1px 0 rgba(0,0,0,0)"></div><div class="abs" style="left:1813.0px;top:176.0px;width:1.0px;height:1px;background:#cccccc;opacity:0.75;box-shadow:0 1px 0 rgba(0,0,0,0)"></div><div class="abs" style="left:1815.0px;top:176.0px;width:4.0px;height:1px;background:#cccccc;opacity:0.75;box-shadow:0 1px 0 rgba(0,0,0,0)"></div><div class="abs" style="left:1819.0px;top:176.0px;width:6.0px;height:1px;background:#dcdcaa;opacity:0.75;box-shadow:0 1px 0 rgba(0,0,0,0)"></div><div class="abs" style="left:1825.0px;top:176.0px;width:1.0px;height:1px;background:#da70d6;opacity:0.75;box-shadow:0 1px 0 rgba(0,0,0,0)"></div><div class="abs" style="left:1826.0px;top:176.0px;width:13.0px;height:1px;background:#cccccc;opacity:0.75;box-shadow:0 1px 0 rgba(0,0,0,0)"></div><div class="abs" style="left:1840.0px;top:176.0px;width:1.0px;height:1px;background:#cccccc;opacity:0.75;box-shadow:0 1px 0 rgba(0,0,0,0)"></div><div class="abs" style="left:1841.0px;top:176.0px;width:3.0px;height:1px;background:#8d8df0;opacity:0.75;box-shadow:0 1px 0 rgba(0,0,0,0)"></div><div class="abs" style="left:1845.0px;top:176.0px;width:5.0px;height:1px;background:#cccccc;opacity:0.75;box-shadow:0 1px 0 rgba(0,0,0,0)"></div><div class="abs" style="left:1850.0px;top:176.0px;width:4.0px;height:1px;background:#cccccc;opacity:0.75;box-shadow:0 1px 0 rgba(0,0,0,0)"></div><div class="abs" style="left:1854.0px;top:176.0px;width:1.0px;height:1px;background:#da70d6;opacity:0.75;box-shadow:0 1px 0 rgba(0,0,0,0)"></div><div class="abs" style="left:1855.0px;top:176.0px;width:1.0px;height:1px;background:#cccccc;opacity:0.75;box-shadow:0 1px 0 rgba(0,0,0,0)"></div><div class="abs" style="left:1798.0px;top:180.0px;width:2.0px;height:1px;background:#6a9955;opacity:0.75;box-shadow:0 1px 0 rgba(0,0,0,0)"></div><div class="abs" style="left:1801.0px;top:180.0px;width:6.0px;height:1px;background:#6a9955;opacity:0.75;box-shadow:0 1px 0 rgba(0,0,0,0)"></div><div class="abs" style="left:1808.0px;top:180.0px;width:1.0px;height:1px;background:#6a9955;opacity:0.75;box-shadow:0 1px 0 rgba(0,0,0,0)"></div><div class="abs" style="left:1810.0px;top:180.0px;width:5.0px;height:1px;background:#6a9955;opacity:0.75;box-shadow:0 1px 0 rgba(0,0,0,0)"></div><div class="abs" style="left:1816.0px;top:180.0px;width:8.0px;height:1px;background:#6a9955;opacity:0.75;box-shadow:0 1px 0 rgba(0,0,0,0)"></div><div class="abs" style="left:1825.0px;top:180.0px;width:5.0px;height:1px;background:#6a9955;opacity:0.75;box-shadow:0 1px 0 rgba(0,0,0,0)"></div><div class="abs" style="left:1831.0px;top:180.0px;width:3.0px;height:1px;background:#6a9955;opacity:0.75;box-shadow:0 1px 0 rgba(0,0,0,0)"></div><div class="abs" style="left:1835.0px;top:180.0px;width:9.0px;height:1px;background:#6a9955;opacity:0.75;box-shadow:0 1px 0 rgba(0,0,0,0)"></div><div class="abs" style="left:1845.0px;top:180.0px;width:6.0px;height:1px;background:#6a9955;opacity:0.75;box-shadow:0 1px 0 rgba(0,0,0,0)"></div><div class="abs" style="left:1852.0px;top:180.0px;width:5.0px;height:1px;background:#6a9955;opacity:0.75;box-shadow:0 1px 0 rgba(0,0,0,0)"></div><div class="abs" style="left:1858.0px;top:180.0px;width:6.0px;height:1px;background:#6a9955;opacity:0.75;box-shadow:0 1px 0 rgba(0,0,0,0)"></div><div class="abs" style="left:1798.0px;top:182.0px;width:3.0px;height:1px;background:#569cd6;opacity:0.75;box-shadow:0 1px 0 rgba(0,0,0,0)"></div><div class="abs" style="left:1802.0px;top:182.0px;width:3.0px;height:1px;background:#8d8df0;opacity:0.75;box-shadow:0 1px 0 rgba(0,0,0,0)"></div><div class="abs" style="left:1806.0px;top:182.0px;width:5.0px;height:1px;background:#cccccc;opacity:0.75;box-shadow:0 1px 0 rgba(0,0,0,0)"></div><div class="abs" style="left:1812.0px;top:182.0px;width:1.0px;height:1px;background:#cccccc;opacity:0.75;box-shadow:0 1px 0 rgba(0,0,0,0)"></div><div class="abs" style="left:1814.0px;top:182.0px;width:5.0px;height:1px;background:#4ec9b0;opacity:0.75;box-shadow:0 1px 0 rgba(0,0,0,0)"></div><div class="abs" style="left:1819.0px;top:182.0px;width:2.0px;height:1px;background:#cccccc;opacity:0.75;box-shadow:0 1px 0 rgba(0,0,0,0)"></div><div class="abs" style="left:1821.0px;top:182.0px;width:3.0px;height:1px;background:#dcdcaa;opacity:0.75;box-shadow:0 1px 0 rgba(0,0,0,0)"></div><div class="abs" style="left:1824.0px;top:182.0px;width:1.0px;height:1px;background:#da70d6;opacity:0.75;box-shadow:0 1px 0 rgba(0,0,0,0)"></div><div class="abs" style="left:1825.0px;top:182.0px;width:8.0px;height:1px;background:#cccccc;opacity:0.75;box-shadow:0 1px 0 rgba(0,0,0,0)"></div><div class="abs" style="left:1834.0px;top:182.0px;width:6.0px;height:1px;background:#cccccc;opacity:0.75;box-shadow:0 1px 0 rgba(0,0,0,0)"></div><div class="abs" style="left:1840.0px;top:182.0px;width:8.0px;height:1px;background:#cccccc;opacity:0.75;box-shadow:0 1px 0 rgba(0,0,0,0)"></div><div class="abs" style="left:1848.0px;top:182.0px;width:4.0px;height:1px;background:#dcdcaa;opacity:0.75;box-shadow:0 1px 0 rgba(0,0,0,0)"></div><div class="abs" style="left:1852.0px;top:182.0px;width:2.0px;height:1px;background:#179fff;opacity:0.75;box-shadow:0 1px 0 rgba(0,0,0,0)"></div><div class="abs" style="left:1854.0px;top:182.0px;width:1.0px;height:1px;background:#cccccc;opacity:0.75;box-shadow:0 1px 0 rgba(0,0,0,0)"></div><div class="abs" style="left:1855.0px;top:182.0px;width:5.0px;height:1px;background:#dcdcaa;opacity:0.75;box-shadow:0 1px 0 rgba(0,0,0,0)"></div><div class="abs" style="left:1860.0px;top:182.0px;width:2.0px;height:1px;background:#179fff;opacity:0.75;box-shadow:0 1px 0 rgba(0,0,0,0)"></div><div class="abs" style="left:1862.0px;top:182.0px;width:1.0px;height:1px;background:#da70d6;opacity:0.75;box-shadow:0 1px 0 rgba(0,0,0,0)"></div><div class="abs" style="left:1863.0px;top:182.0px;width:1.0px;height:1px;background:#cccccc;opacity:0.75;box-shadow:0 1px 0 rgba(0,0,0,0)"></div><div class="abs" style="left:1798.0px;top:186.0px;width:2.0px;height:1px;background:#6a9955;opacity:0.75;box-shadow:0 1px 0 rgba(0,0,0,0)"></div><div class="abs" style="left:1801.0px;top:186.0px;width:6.0px;height:1px;background:#6a9955;opacity:0.75;box-shadow:0 1px 0 rgba(0,0,0,0)"></div><div class="abs" style="left:1808.0px;top:186.0px;width:4.0px;height:1px;background:#6a9955;opacity:0.75;box-shadow:0 1px 0 rgba(0,0,0,0)"></div><div class="abs" style="left:1813.0px;top:186.0px;width:10.0px;height:1px;background:#6a9955;opacity:0.75;box-shadow:0 1px 0 rgba(0,0,0,0)"></div><div class="abs" style="left:1798.0px;top:188.0px;width:3.0px;height:1px;background:#569cd6;opacity:0.75;box-shadow:0 1px 0 rgba(0,0,0,0)"></div><div class="abs" style="left:1802.0px;top:188.0px;width:3.0px;height:1px;background:#8d8df0;opacity:0.75;box-shadow:0 1px 0 rgba(0,0,0,0)"></div><div class="abs" style="left:1806.0px;top:188.0px;width:4.0px;height:1px;background:#cccccc;opacity:0.75;box-shadow:0 1px 0 rgba(0,0,0,0)"></div><div class="abs" style="left:1811.0px;top:188.0px;width:1.0px;height:1px;background:#cccccc;opacity:0.75;box-shadow:0 1px 0 rgba(0,0,0,0)"></div><div class="abs" style="left:1813.0px;top:188.0px;width:3.0px;height:1px;background:#4ec9b0;opacity:0.75;box-shadow:0 1px 0 rgba(0,0,0,0)"></div><div class="abs" style="left:1816.0px;top:188.0px;width:2.0px;height:1px;background:#cccccc;opacity:0.75;box-shadow:0 1px 0 rgba(0,0,0,0)"></div><div class="abs" style="left:1818.0px;top:188.0px;width:3.0px;height:1px;background:#4ec9b0;opacity:0.75;box-shadow:0 1px 0 rgba(0,0,0,0)"></div><div class="abs" style="left:1821.0px;top:188.0px;width:2.0px;height:1px;background:#cccccc;opacity:0.75;box-shadow:0 1px 0 rgba(0,0,0,0)"></div><div class="abs" style="left:1823.0px;top:188.0px;width:3.0px;height:1px;background:#dcdcaa;opacity:0.75;box-shadow:0 1px 0 rgba(0,0,0,0)"></div><div class="abs" style="left:1826.0px;top:188.0px;width:1.0px;height:1px;background:#da70d6;opacity:0.75;box-shadow:0 1px 0 rgba(0,0,0,0)"></div><div class="abs" style="left:1827.0px;top:188.0px;width:8.0px;height:1px;background:#cccccc;opacity:0.75;box-shadow:0 1px 0 rgba(0,0,0,0)"></div><div class="abs" style="left:1836.0px;top:188.0px;width:1.0px;height:1px;background:#cccccc;opacity:0.75;box-shadow:0 1px 0 rgba(0,0,0,0)"></div><div class="abs" style="left:1837.0px;top:188.0px;width:3.0px;height:1px;background:#8d8df0;opacity:0.75;box-shadow:0 1px 0 rgba(0,0,0,0)"></div><div class="abs" style="left:1841.0px;top:188.0px;width:6.0px;height:1px;background:#cccccc;opacity:0.75;box-shadow:0 1px 0 rgba(0,0,0,0)"></div><div class="abs" style="left:1847.0px;top:188.0px;width:1.0px;height:1px;background:#da70d6;opacity:0.75;box-shadow:0 1px 0 rgba(0,0,0,0)"></div><div class="abs" style="left:1848.0px;top:188.0px;width:1.0px;height:1px;background:#cccccc;opacity:0.75;box-shadow:0 1px 0 rgba(0,0,0,0)"></div><div class="abs" style="left:1798.0px;top:192.0px;width:2.0px;height:1px;background:#6a9955;opacity:0.75;box-shadow:0 1px 0 rgba(0,0,0,0)"></div><div class="abs" style="left:1801.0px;top:192.0px;width:6.0px;height:1px;background:#6a9955;opacity:0.75;box-shadow:0 1px 0 rgba(0,0,0,0)"></div><div class="abs" style="left:1808.0px;top:192.0px;width:4.0px;height:1px;background:#6a9955;opacity:0.75;box-shadow:0 1px 0 rgba(0,0,0,0)"></div><div class="abs" style="left:1813.0px;top:192.0px;width:4.0px;height:1px;background:#6a9955;opacity:0.75;box-shadow:0 1px 0 rgba(0,0,0,0)"></div><div class="abs" style="left:1818.0px;top:192.0px;width:1.0px;height:1px;background:#6a9955;opacity:0.75;box-shadow:0 1px 0 rgba(0,0,0,0)"></div><div class="abs" style="left:1820.0px;top:192.0px;width:10.0px;height:1px;background:#6a9955;opacity:0.75;box-shadow:0 1px 0 rgba(0,0,0,0)"></div><div class="abs" style="left:1798.0px;top:194.0px;width:3.0px;height:1px;background:#569cd6;opacity:0.75;box-shadow:0 1px 0 rgba(0,0,0,0)"></div><div class="abs" style="left:1802.0px;top:194.0px;width:3.0px;height:1px;background:#8d8df0;opacity:0.75;box-shadow:0 1px 0 rgba(0,0,0,0)"></div><div class="abs" style="left:1806.0px;top:194.0px;width:5.0px;height:1px;background:#cccccc;opacity:0.75;box-shadow:0 1px 0 rgba(0,0,0,0)"></div><div class="abs" style="left:1812.0px;top:194.0px;width:1.0px;height:1px;background:#cccccc;opacity:0.75;box-shadow:0 1px 0 rgba(0,0,0,0)"></div><div class="abs" style="left:1814.0px;top:194.0px;width:9.0px;height:1px;background:#cccccc;opacity:0.75;box-shadow:0 1px 0 rgba(0,0,0,0)"></div><div class="abs" style="left:1823.0px;top:194.0px;width:5.0px;height:1px;background:#dcdcaa;opacity:0.75;box-shadow:0 1px 0 rgba(0,0,0,0)"></div><div class="abs" style="left:1828.0px;top:194.0px;width:1.0px;height:1px;background:#da70d6;opacity:0.75;box-shadow:0 1px 0 rgba(0,0,0,0)"></div><div class="abs" style="left:1829.0px;top:194.0px;width:1.0px;height:1px;background:#cccccc;opacity:0.75;box-shadow:0 1px 0 rgba(0,0,0,0)"></div><div class="abs" style="left:1830.0px;top:194.0px;width:3.0px;height:1px;background:#8d8df0;opacity:0.75;box-shadow:0 1px 0 rgba(0,0,0,0)"></div><div class="abs" style="left:1834.0px;top:194.0px;width:8.0px;height:1px;background:#cccccc;opacity:0.75;box-shadow:0 1px 0 rgba(0,0,0,0)"></div><div class="abs" style="left:1842.0px;top:194.0px;width:1.0px;height:1px;background:#da70d6;opacity:0.75;box-shadow:0 1px 0 rgba(0,0,0,0)"></div><div class="abs" style="left:1843.0px;top:194.0px;width:1.0px;height:1px;background:#cccccc;opacity:0.75;box-shadow:0 1px 0 rgba(0,0,0,0)"></div><div class="abs" style="left:1798.0px;top:196.0px;width:2.0px;height:1px;background:#6a9955;opacity:0.75;box-shadow:0 1px 0 rgba(0,0,0,0)"></div><div class="abs" style="left:1801.0px;top:196.0px;width:9.0px;height:1px;background:#6a9955;opacity:0.75;box-shadow:0 1px 0 rgba(0,0,0,0)"></div><div class="abs" style="left:1811.0px;top:196.0px;width:3.0px;height:1px;background:#6a9955;opacity:0.75;box-shadow:0 1px 0 rgba(0,0,0,0)"></div><div class="abs" style="left:1815.0px;top:196.0px;width:2.0px;height:1px;background:#6a9955;opacity:0.75;box-shadow:0 1px 0 rgba(0,0,0,0)"></div><div class="abs" style="left:1818.0px;top:196.0px;width:2.0px;height:1px;background:#6a9955;opacity:0.75;box-shadow:0 1px 0 rgba(0,0,0,0)"></div><div class="abs" style="left:1821.0px;top:196.0px;width:6.0px;height:1px;background:#6a9955;opacity:0.75;box-shadow:0 1px 0 rgba(0,0,0,0)"></div><div class="abs" style="left:1828.0px;top:196.0px;width:5.0px;height:1px;background:#6a9955;opacity:0.75;box-shadow:0 1px 0 rgba(0,0,0,0)"></div><div class="abs" style="left:1798.0px;top:198.0px;width:3.0px;height:1px;background:#569cd6;opacity:0.75;box-shadow:0 1px 0 rgba(0,0,0,0)"></div><div class="abs" style="left:1802.0px;top:198.0px;width:3.0px;height:1px;background:#8d8df0;opacity:0.75;box-shadow:0 1px 0 rgba(0,0,0,0)"></div><div class="abs" style="left:1806.0px;top:198.0px;width:8.0px;height:1px;background:#cccccc;opacity:0.75;box-shadow:0 1px 0 rgba(0,0,0,0)"></div><div class="abs" style="left:1815.0px;top:198.0px;width:1.0px;height:1px;background:#cccccc;opacity:0.75;box-shadow:0 1px 0 rgba(0,0,0,0)"></div><div class="abs" style="left:1817.0px;top:198.0px;width:5.0px;height:1px;background:#cccccc;opacity:0.75;box-shadow:0 1px 0 rgba(0,0,0,0)"></div><div class="abs" style="left:1822.0px;top:198.0px;width:5.0px;height:1px;background:#cccccc;opacity:0.75;box-shadow:0 1px 0 rgba(0,0,0,0)"></div><div class="abs" style="left:1827.0px;top:198.0px;width:11.0px;height:1px;background:#dcdcaa;opacity:0.75;box-shadow:0 1px 0 rgba(0,0,0,0)"></div><div class="abs" style="left:1838.0px;top:198.0px;width:1.0px;height:1px;background:#da70d6;opacity:0.75;box-shadow:0 1px 0 rgba(0,0,0,0)"></div><div class="abs" style="left:1839.0px;top:198.0px;width:1.0px;height:1px;background:#cccccc;opacity:0.75;box-shadow:0 1px 0 rgba(0,0,0,0)"></div><div class="abs" style="left:1840.0px;top:198.0px;width:3.0px;height:1px;background:#8d8df0;opacity:0.75;box-shadow:0 1px 0 rgba(0,0,0,0)"></div><div class="abs" style="left:1844.0px;top:198.0px;width:5.0px;height:1px;background:#cccccc;opacity:0.75;box-shadow:0 1px 0 rgba(0,0,0,0)"></div><div class="abs" style="left:1849.0px;top:198.0px;width:4.0px;height:1px;background:#cccccc;opacity:0.75;box-shadow:0 1px 0 rgba(0,0,0,0)"></div><div class="abs" style="left:1853.0px;top:198.0px;width:1.0px;height:1px;background:#da70d6;opacity:0.75;box-shadow:0 1px 0 rgba(0,0,0,0)"></div><div class="abs" style="left:1854.0px;top:198.0px;width:1.0px;height:1px;background:#cccccc;opacity:0.75;box-shadow:0 1px 0 rgba(0,0,0,0)"></div><div class="abs" style="left:1798.0px;top:202.0px;width:2.0px;height:1px;background:#6a9955;opacity:0.75;box-shadow:0 1px 0 rgba(0,0,0,0)"></div><div class="abs" style="left:1801.0px;top:202.0px;width:3.0px;height:1px;background:#6a9955;opacity:0.75;box-shadow:0 1px 0 rgba(0,0,0,0)"></div><div class="abs" style="left:1805.0px;top:202.0px;width:7.0px;height:1px;background:#6a9955;opacity:0.75;box-shadow:0 1px 0 rgba(0,0,0,0)"></div><div class="abs" style="left:1813.0px;top:202.0px;width:4.0px;height:1px;background:#6a9955;opacity:0.75;box-shadow:0 1px 0 rgba(0,0,0,0)"></div><div class="abs" style="left:1818.0px;top:202.0px;width:3.0px;height:1px;background:#6a9955;opacity:0.75;box-shadow:0 1px 0 rgba(0,0,0,0)"></div><div class="abs" style="left:1822.0px;top:202.0px;width:10.0px;height:1px;background:#6a9955;opacity:0.75;box-shadow:0 1px 0 rgba(0,0,0,0)"></div><div class="abs" style="left:1833.0px;top:202.0px;width:2.0px;height:1px;background:#6a9955;opacity:0.75;box-shadow:0 1px 0 rgba(0,0,0,0)"></div><div class="abs" style="left:1836.0px;top:202.0px;width:2.0px;height:1px;background:#6a9955;opacity:0.75;box-shadow:0 1px 0 rgba(0,0,0,0)"></div><div class="abs" style="left:1839.0px;top:202.0px;width:8.0px;height:1px;background:#6a9955;opacity:0.75;box-shadow:0 1px 0 rgba(0,0,0,0)"></div><div class="abs" style="left:1848.0px;top:202.0px;width:4.0px;height:1px;background:#6a9955;opacity:0.75;box-shadow:0 1px 0 rgba(0,0,0,0)"></div><div class="abs" style="left:1798.0px;top:204.0px;width:4.0px;height:1px;background:#cccccc;opacity:0.75;box-shadow:0 1px 0 rgba(0,0,0,0)"></div><div class="abs" style="left:1803.0px;top:204.0px;width:1.0px;height:1px;background:#da70d6;opacity:0.75;box-shadow:0 1px 0 rgba(0,0,0,0)"></div><div class="abs" style="left:1802.0px;top:206.0px;width:2.0px;height:1px;background:#6a9955;opacity:0.75;box-shadow:0 1px 0 rgba(0,0,0,0)"></div><div class="abs" style="left:1805.0px;top:206.0px;width:3.0px;height:1px;background:#6a9955;opacity:0.75;box-shadow:0 1px 0 rgba(0,0,0,0)"></div><div class="abs" style="left:1809.0px;top:206.0px;width:8.0px;height:1px;background:#6a9955;opacity:0.75;box-shadow:0 1px 0 rgba(0,0,0,0)"></div><div class="abs" style="left:1818.0px;top:206.0px;width:4.0px;height:1px;background:#6a9955;opacity:0.75;box-shadow:0 1px 0 rgba(0,0,0,0)"></div><div class="abs" style="left:1823.0px;top:206.0px;width:2.0px;height:1px;background:#6a9955;opacity:0.75;box-shadow:0 1px 0 rgba(0,0,0,0)"></div><div class="abs" style="left:1826.0px;top:206.0px;width:4.0px;height:1px;background:#6a9955;opacity:0.75;box-shadow:0 1px 0 rgba(0,0,0,0)"></div><div class="abs" style="left:1831.0px;top:206.0px;width:3.0px;height:1px;background:#6a9955;opacity:0.75;box-shadow:0 1px 0 rgba(0,0,0,0)"></div><div class="abs" style="left:1835.0px;top:206.0px;width:7.0px;height:1px;background:#6a9955;opacity:0.75;box-shadow:0 1px 0 rgba(0,0,0,0)"></div><div class="abs" style="left:1843.0px;top:206.0px;width:3.0px;height:1px;background:#6a9955;opacity:0.75;box-shadow:0 1px 0 rgba(0,0,0,0)"></div><div class="abs" style="left:1847.0px;top:206.0px;width:5.0px;height:1px;background:#6a9955;opacity:0.75;box-shadow:0 1px 0 rgba(0,0,0,0)"></div><div class="abs" style="left:1853.0px;top:206.0px;width:7.0px;height:1px;background:#6a9955;opacity:0.75;box-shadow:0 1px 0 rgba(0,0,0,0)"></div><div class="abs" style="left:1861.0px;top:206.0px;width:4.0px;height:1px;background:#6a9955;opacity:0.75;box-shadow:0 1px 0 rgba(0,0,0,0)"></div><div class="abs" style="left:1866.0px;top:206.0px;width:1.0px;height:1px;background:#6a9955;opacity:0.75;box-shadow:0 1px 0 rgba(0,0,0,0)"></div><div class="abs" style="left:1868.0px;top:206.0px;width:7.0px;height:1px;background:#6a9955;opacity:0.75;box-shadow:0 1px 0 rgba(0,0,0,0)"></div><div class="abs" style="left:1876.0px;top:206.0px;width:5.0px;height:1px;background:#6a9955;opacity:0.75;box-shadow:0 1px 0 rgba(0,0,0,0)"></div><div class="abs" style="left:1802.0px;top:208.0px;width:3.0px;height:1px;background:#569cd6;opacity:0.75;box-shadow:0 1px 0 rgba(0,0,0,0)"></div><div class="abs" style="left:1806.0px;top:208.0px;width:5.0px;height:1px;background:#cccccc;opacity:0.75;box-shadow:0 1px 0 rgba(0,0,0,0)"></div><div class="abs" style="left:1812.0px;top:208.0px;width:3.0px;height:1px;background:#4ec9b0;opacity:0.75;box-shadow:0 1px 0 rgba(0,0,0,0)"></div><div class="abs" style="left:1816.0px;top:208.0px;width:1.0px;height:1px;background:#cccccc;opacity:0.75;box-shadow:0 1px 0 rgba(0,0,0,0)"></div><div class="abs" style="left:1818.0px;top:208.0px;width:4.0px;height:1px;background:#cccccc;opacity:0.75;box-shadow:0 1px 0 rgba(0,0,0,0)"></div><div class="abs" style="left:1822.0px;top:208.0px;width:1.0px;height:1px;background:#cccccc;opacity:0.75;box-shadow:0 1px 0 rgba(0,0,0,0)"></div><div class="abs" style="left:1823.0px;top:208.0px;width:4.0px;height:1px;background:#dcdcaa;opacity:0.75;box-shadow:0 1px 0 rgba(0,0,0,0)"></div><div class="abs" style="left:1827.0px;top:208.0px;width:1.0px;height:1px;background:#179fff;opacity:0.75;box-shadow:0 1px 0 rgba(0,0,0,0)"></div><div class="abs" style="left:1828.0px;top:208.0px;width:1.0px;height:1px;background:#cccccc;opacity:0.75;box-shadow:0 1px 0 rgba(0,0,0,0)"></div><div class="abs" style="left:1829.0px;top:208.0px;width:3.0px;height:1px;background:#8d8df0;opacity:0.75;box-shadow:0 1px 0 rgba(0,0,0,0)"></div><div class="abs" style="left:1833.0px;top:208.0px;width:8.0px;height:1px;background:#cccccc;opacity:0.75;box-shadow:0 1px 0 rgba(0,0,0,0)"></div><div class="abs" style="left:1841.0px;top:208.0px;width:1.0px;height:1px;background:#179fff;opacity:0.75;box-shadow:0 1px 0 rgba(0,0,0,0)"></div><div class="abs" style="left:1842.0px;top:208.0px;width:1.0px;height:1px;background:#cccccc;opacity:0.75;box-shadow:0 1px 0 rgba(0,0,0,0)"></div><div class="abs" style="left:1843.0px;top:208.0px;width:6.0px;height:1px;background:#dcdcaa;opacity:0.75;box-shadow:0 1px 0 rgba(0,0,0,0)"></div><div class="abs" style="left:1849.0px;top:208.0px;width:2.0px;height:1px;background:#179fff;opacity:0.75;box-shadow:0 1px 0 rgba(0,0,0,0)"></div><div class="abs" style="left:1851.0px;top:208.0px;width:1.0px;height:1px;background:#cccccc;opacity:0.75;box-shadow:0 1px 0 rgba(0,0,0,0)"></div><div class="abs" style="left:1802.0px;top:210.0px;width:2.0px;height:1px;background:#6a9955;opacity:0.75;box-shadow:0 1px 0 rgba(0,0,0,0)"></div><div class="abs" style="left:1805.0px;top:210.0px;width:9.0px;height:1px;background:#6a9955;opacity:0.75;box-shadow:0 1px 0 rgba(0,0,0,0)"></div><div class="abs" style="left:1815.0px;top:210.0px;width:3.0px;height:1px;background:#6a9955;opacity:0.75;box-shadow:0 1px 0 rgba(0,0,0,0)"></div><div class="abs" style="left:1819.0px;top:210.0px;width:5.0px;height:1px;background:#6a9955;opacity:0.75;box-shadow:0 1px 0 rgba(0,0,0,0)"></div><div class="abs" style="left:1825.0px;top:210.0px;width:7.0px;height:1px;background:#6a9955;opacity:0.75;box-shadow:0 1px 0 rgba(0,0,0,0)"></div><div class="abs" style="left:1833.0px;top:210.0px;width:4.0px;height:1px;background:#6a9955;opacity:0.75;box-shadow:0 1px 0 rgba(0,0,0,0)"></div><div class="abs" style="left:1838.0px;top:210.0px;width:3.0px;height:1px;background:#6a9955;opacity:0.75;box-shadow:0 1px 0 rgba(0,0,0,0)"></div><div class="abs" style="left:1842.0px;top:210.0px;width:4.0px;height:1px;background:#6a9955;opacity:0.75;box-shadow:0 1px 0 rgba(0,0,0,0)"></div><div class="abs" style="left:1847.0px;top:210.0px;width:7.0px;height:1px;background:#6a9955;opacity:0.75;box-shadow:0 1px 0 rgba(0,0,0,0)"></div><div class="abs" style="left:1855.0px;top:210.0px;width:5.0px;height:1px;background:#6a9955;opacity:0.75;box-shadow:0 1px 0 rgba(0,0,0,0)"></div><div class="abs" style="left:1802.0px;top:212.0px;width:3.0px;height:1px;background:#569cd6;opacity:0.75;box-shadow:0 1px 0 rgba(0,0,0,0)"></div><div class="abs" style="left:1806.0px;top:212.0px;width:14.0px;height:1px;background:#cccccc;opacity:0.75;box-shadow:0 1px 0 rgba(0,0,0,0)"></div><div class="abs" style="left:1821.0px;top:212.0px;width:3.0px;height:1px;background:#4ec9b0;opacity:0.75;box-shadow:0 1px 0 rgba(0,0,0,0)"></div><div class="abs" style="left:1825.0px;top:212.0px;width:1.0px;height:1px;background:#cccccc;opacity:0.75;box-shadow:0 1px 0 rgba(0,0,0,0)"></div><div class="abs" style="left:1827.0px;top:212.0px;width:6.0px;height:1px;background:#b5cea8;opacity:0.75;box-shadow:0 1px 0 rgba(0,0,0,0)"></div><div class="abs" style="left:1834.0px;top:212.0px;width:1.0px;height:1px;background:#cccccc;opacity:0.75;box-shadow:0 1px 0 rgba(0,0,0,0)"></div><div class="abs" style="left:1836.0px;top:212.0px;width:4.0px;height:1px;background:#cccccc;opacity:0.75;box-shadow:0 1px 0 rgba(0,0,0,0)"></div><div class="abs" style="left:1841.0px;top:212.0px;width:2.0px;height:1px;background:#569cd6;opacity:0.75;box-shadow:0 1px 0 rgba(0,0,0,0)"></div><div class="abs" style="left:1844.0px;top:212.0px;width:3.0px;height:1px;background:#4ec9b0;opacity:0.75;box-shadow:0 1px 0 rgba(0,0,0,0)"></div><div class="abs" style="left:1848.0px;top:212.0px;width:1.0px;height:1px;background:#cccccc;opacity:0.75;box-shadow:0 1px 0 rgba(0,0,0,0)"></div><div class="abs" style="left:1850.0px;top:212.0px;width:9.0px;height:1px;background:#b5cea8;opacity:0.75;box-shadow:0 1px 0 rgba(0,0,0,0)"></div><div class="abs" style="left:1859.0px;top:212.0px;width:1.0px;height:1px;background:#cccccc;opacity:0.75;box-shadow:0 1px 0 rgba(0,0,0,0)"></div><div class="abs" style="left:1802.0px;top:214.0px;width:2.0px;height:1px;background:#6a9955;opacity:0.75;box-shadow:0 1px 0 rgba(0,0,0,0)"></div><div class="abs" style="left:1805.0px;top:214.0px;width:4.0px;height:1px;background:#6a9955;opacity:0.75;box-shadow:0 1px 0 rgba(0,0,0,0)"></div><div class="abs" style="left:1810.0px;top:214.0px;width:7.0px;height:1px;background:#6a9955;opacity:0.75;box-shadow:0 1px 0 rgba(0,0,0,0)"></div><div class="abs" style="left:1818.0px;top:214.0px;width:2.0px;height:1px;background:#6a9955;opacity:0.75;box-shadow:0 1px 0 rgba(0,0,0,0)"></div><div class="abs" style="left:1821.0px;top:214.0px;width:9.0px;height:1px;background:#6a9955;opacity:0.75;box-shadow:0 1px 0 rgba(0,0,0,0)"></div><div class="abs" style="left:1802.0px;top:216.0px;width:5.0px;height:1px;background:#4ec9b0;opacity:0.75;box-shadow:0 1px 0 rgba(0,0,0,0)"></div><div class="abs" style="left:1807.0px;top:216.0px;width:2.0px;height:1px;background:#cccccc;opacity:0.75;box-shadow:0 1px 0 rgba(0,0,0,0)"></div><div class="abs" style="left:1809.0px;top:216.0px;width:8.0px;height:1px;background:#569cd6;opacity:0.75;box-shadow:0 1px 0 rgba(0,0,0,0)"></div><div class="abs" style="left:1817.0px;top:216.0px;width:1.0px;height:1px;background:#179fff;opacity:0.75;box-shadow:0 1px 0 rgba(0,0,0,0)"></div><div class="abs" style="left:1806.0px;top:218.0px;width:8.0px;height:1px;background:#ce9178;opacity:0.75;box-shadow:0 1px 0 rgba(0,0,0,0)"></div><div class="abs" style="left:1815.0px;top:218.0px;width:6.0px;height:1px;background:#ce9178;opacity:0.75;box-shadow:0 1px 0 rgba(0,0,0,0)"></div><div class="abs" style="left:1822.0px;top:218.0px;width:2.0px;height:1px;background:#ce9178;opacity:0.75;box-shadow:0 1px 0 rgba(0,0,0,0)"></div><div class="abs" style="left:1825.0px;top:218.0px;width:2.0px;height:1px;background:#ce9178;opacity:0.75;box-shadow:0 1px 0 rgba(0,0,0,0)"></div><div class="abs" style="left:1828.0px;top:218.0px;width:7.0px;height:1px;background:#ce9178;opacity:0.75;box-shadow:0 1px 0 rgba(0,0,0,0)"></div><div class="abs" style="left:1836.0px;top:218.0px;width:6.0px;height:1px;background:#ce9178;opacity:0.75;box-shadow:0 1px 0 rgba(0,0,0,0)"></div><div class="abs" style="left:1843.0px;top:218.0px;width:4.0px;height:1px;background:#ce9178;opacity:0.75;box-shadow:0 1px 0 rgba(0,0,0,0)"></div><div class="abs" style="left:1847.0px;top:218.0px;width:1.0px;height:1px;background:#cccccc;opacity:0.75;box-shadow:0 1px 0 rgba(0,0,0,0)"></div><div class="abs" style="left:1806.0px;top:220.0px;width:5.0px;height:1px;background:#cccccc;opacity:0.75;box-shadow:0 1px 0 rgba(0,0,0,0)"></div><div class="abs" style="left:1806.0px;top:222.0px;width:13.0px;height:1px;background:#cccccc;opacity:0.75;box-shadow:0 1px 0 rgba(0,0,0,0)"></div><div class="abs" style="left:1802.0px;top:224.0px;width:1.0px;height:1px;background:#179fff;opacity:0.75;box-shadow:0 1px 0 rgba(0,0,0,0)"></div><div class="abs" style="left:1803.0px;top:224.0px;width:1.0px;height:1px;background:#cccccc;opacity:0.75;box-shadow:0 1px 0 rgba(0,0,0,0)"></div><div class="abs" style="left:1802.0px;top:226.0px;width:2.0px;height:1px;background:#6a9955;opacity:0.75;box-shadow:0 1px 0 rgba(0,0,0,0)"></div><div class="abs" style="left:1805.0px;top:226.0px;width:4.0px;height:1px;background:#6a9955;opacity:0.75;box-shadow:0 1px 0 rgba(0,0,0,0)"></div><div class="abs" style="left:1810.0px;top:226.0px;width:3.0px;height:1px;background:#6a9955;opacity:0.75;box-shadow:0 1px 0 rgba(0,0,0,0)"></div><div class="abs" style="left:1814.0px;top:226.0px;width:3.0px;height:1px;background:#6a9955;opacity:0.75;box-shadow:0 1px 0 rgba(0,0,0,0)"></div><div class="abs" style="left:1818.0px;top:226.0px;width:2.0px;height:1px;background:#6a9955;opacity:0.75;box-shadow:0 1px 0 rgba(0,0,0,0)"></div><div class="abs" style="left:1802.0px;top:228.0px;width:5.0px;height:1px;background:#cccccc;opacity:0.75;box-shadow:0 1px 0 rgba(0,0,0,0)"></div><div class="abs" style="left:1807.0px;top:228.0px;width:1.0px;height:1px;background:#cccccc;opacity:0.75;box-shadow:0 1px 0 rgba(0,0,0,0)"></div><div class="abs" style="left:1808.0px;top:228.0px;width:8.0px;height:1px;background:#dcdcaa;opacity:0.75;box-shadow:0 1px 0 rgba(0,0,0,0)"></div><div class="abs" style="left:1816.0px;top:228.0px;width:1.0px;height:1px;background:#179fff;opacity:0.75;box-shadow:0 1px 0 rgba(0,0,0,0)"></div><div class="abs" style="left:1817.0px;top:228.0px;width:3.0px;height:1px;background:#b5cea8;opacity:0.75;box-shadow:0 1px 0 rgba(0,0,0,0)"></div><div class="abs" style="left:1820.0px;top:228.0px;width:1.0px;height:1px;background:#179fff;opacity:0.75;box-shadow:0 1px 0 rgba(0,0,0,0)"></div><div class="abs" style="left:1821.0px;top:228.0px;width:1.0px;height:1px;background:#cccccc;opacity:0.75;box-shadow:0 1px 0 rgba(0,0,0,0)"></div><div class="abs" style="left:1798.0px;top:230.0px;width:1.0px;height:1px;background:#da70d6;opacity:0.75;box-shadow:0 1px 0 rgba(0,0,0,0)"></div><div class="abs" style="left:1794.0px;top:232.0px;width:1.0px;height:1px;background:#ffd700;opacity:0.75;box-shadow:0 1px 0 rgba(0,0,0,0)"></div></body></html>
